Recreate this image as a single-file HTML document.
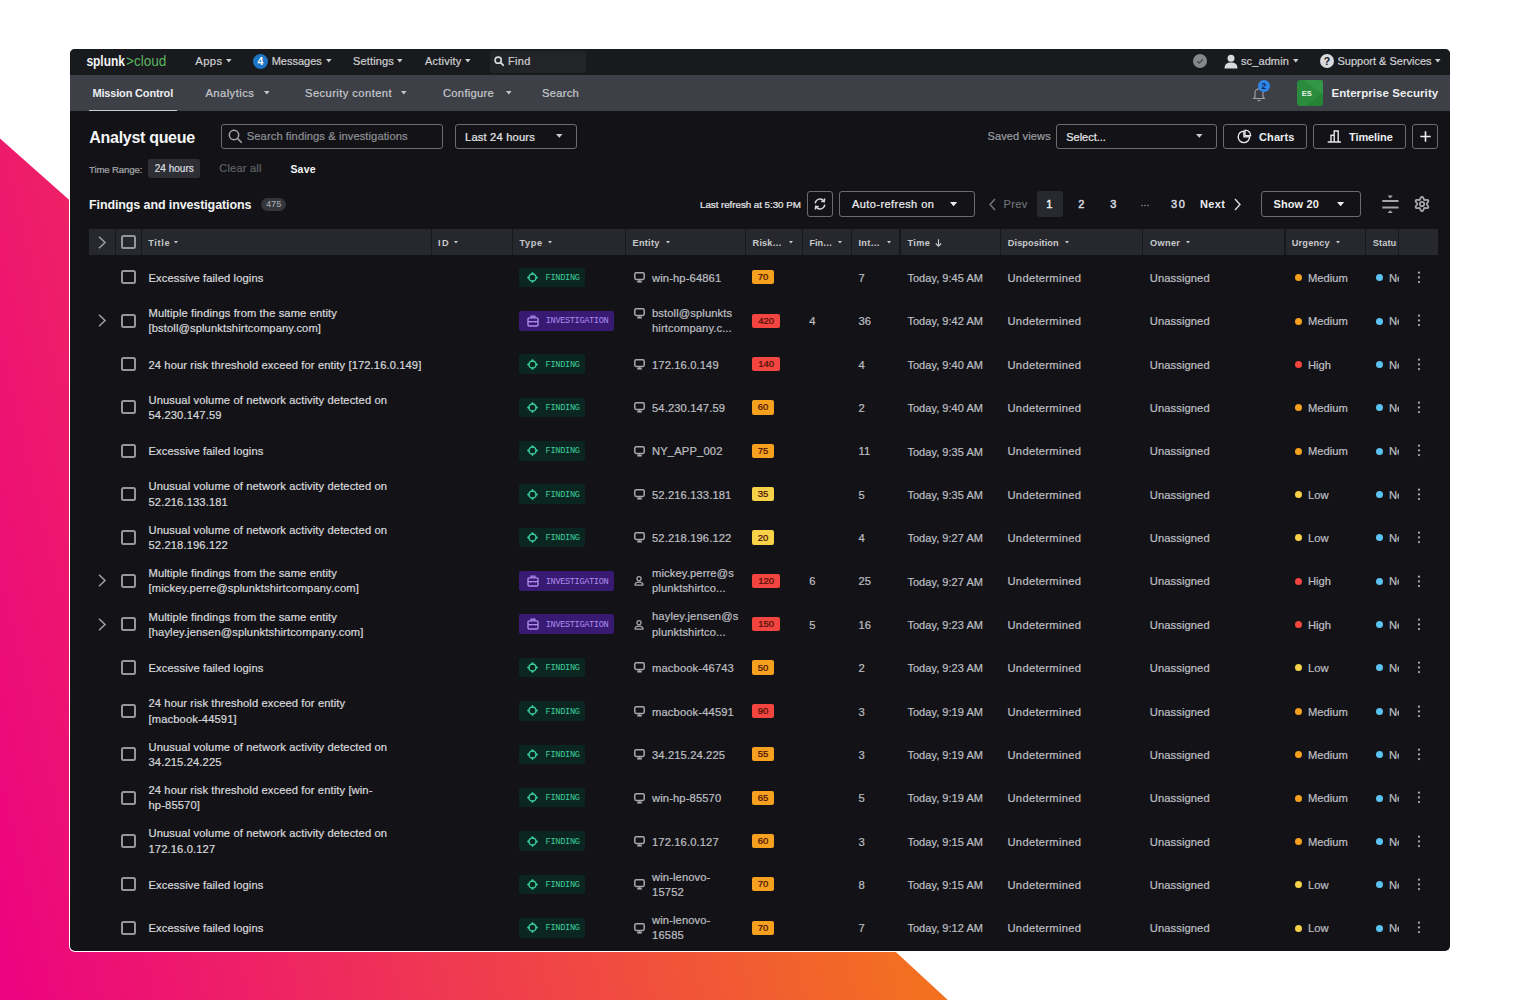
<!DOCTYPE html><html><head><meta charset="utf-8"><title>Analyst queue</title><style>
*{margin:0;padding:0;box-sizing:border-box}
html,body{width:1520px;height:1000px;overflow:hidden;background:#fff}
body{position:relative;font-family:"Liberation Sans",sans-serif}
.a{position:absolute;white-space:nowrap}
svg{position:absolute;overflow:visible}
</style></head><body>
<svg style="left:0;top:0" width="1520" height="1000" viewBox="0 0 1520 1000"><defs><linearGradient id="g" gradientUnits="userSpaceOnUse" x1="-218.2" y1="51.6" x2="652.8" y2="-154.3"><stop offset="0" stop-color="#ec0380"/><stop offset="1" stop-color="#f37020"/></linearGradient></defs><polygon fill="url(#g)" points="0,138.5 200,316 840,900 895.9,952 947.8,1000 0,1000"/></svg>
<div class="a" style="left:69.0px;top:48.0px;width:1382.0px;height:904.0px;background:#fff;border-radius:6px"></div>
<div class="a" style="left:70.0px;top:49.0px;width:1380.0px;height:902.0px;background:#131317;border-radius:5px"></div>
<div class="a" style="left:70.0px;top:49.0px;width:1380.0px;height:26.0px;background:#191a1e;border-radius:5px 5px 0 0"></div>
<div class="a" style="left:70.0px;top:75.0px;width:1380.0px;height:36.0px;background:#3d4047"></div>
<svg style="left:0;top:0" width="1520" height="1000"><text x="86.4" y="66" font-family="Liberation Sans" font-weight="bold" font-size="14.5" fill="#f4f4f5" textLength="38.6" lengthAdjust="spacingAndGlyphs">splunk</text><text x="126" y="66" font-family="Liberation Sans" font-size="14.5" fill="#5cb561" textLength="40.4" lengthAdjust="spacingAndGlyphs">&gt;cloud</text></svg>
<div class="a" style="left:195.2px;top:56.22px;font-size:11.2px;line-height:11.2px;color:#cdced1;letter-spacing:0.500px;-webkit-text-stroke:0.22px currentColor;">Apps</div>
<svg style="left:225.6px;top:58.7px" width="5.6" height="3.6" viewBox="0 0 5.6 3.6"><path d="M0 0 L5.6 0 L2.8 3.6 Z" fill="#cdced1"/></svg>
<div class="a" style="left:253.0px;top:53.5px;width:15.0px;height:15.0px;background:#1e75c4;border-radius:50%"></div>
<div class="a" style="left:257.4px;top:56.31px;font-size:10.5px;line-height:10.5px;color:#fff;font-weight:bold;">4</div>
<div class="a" style="left:271.7px;top:56.39px;font-size:11px;line-height:11px;color:#cdced1;letter-spacing:-0.005px;-webkit-text-stroke:0.22px currentColor;">Messages</div>
<svg style="left:325.9px;top:58.7px" width="5.6" height="3.6" viewBox="0 0 5.6 3.6"><path d="M0 0 L5.6 0 L2.8 3.6 Z" fill="#cdced1"/></svg>
<div class="a" style="left:353.0px;top:56.39px;font-size:11px;line-height:11px;color:#cdced1;letter-spacing:0.151px;-webkit-text-stroke:0.22px currentColor;">Settings</div>
<svg style="left:397.3px;top:58.7px" width="5.6" height="3.6" viewBox="0 0 5.6 3.6"><path d="M0 0 L5.6 0 L2.8 3.6 Z" fill="#cdced1"/></svg>
<div class="a" style="left:425.0px;top:56.39px;font-size:11px;line-height:11px;color:#cdced1;letter-spacing:0.209px;-webkit-text-stroke:0.22px currentColor;">Activity</div>
<svg style="left:464.5px;top:58.7px" width="5.6" height="3.6" viewBox="0 0 5.6 3.6"><path d="M0 0 L5.6 0 L2.8 3.6 Z" fill="#cdced1"/></svg>
<div class="a" style="left:489.5px;top:51.0px;width:96.5px;height:21.5px;background:#222428;border-radius:3px"></div>
<svg style="left:494px;top:56px" width="10" height="10" viewBox="0 0 10 10"><circle cx="4.2" cy="4.2" r="3.1" fill="none" stroke="#d9dadd" stroke-width="1.6"/><path d="M6.4 6.4 L9.2 9.2" stroke="#d9dadd" stroke-width="1.8" stroke-linecap="round"/></svg>
<div class="a" style="left:508.0px;top:56.39px;font-size:11px;line-height:11px;color:#cdced1;letter-spacing:0.301px;-webkit-text-stroke:0.22px currentColor;">Find</div>
<svg style="left:1193px;top:54px" width="14" height="14" viewBox="0 0 14 14"><circle cx="7" cy="7" r="7" fill="#85878b"/><path d="M4.2 7.2 L6.2 9.1 L9.9 5.2" stroke="#45474b" stroke-width="1.3" fill="none"/></svg>
<svg style="left:1224px;top:53.5px" width="14" height="15" viewBox="0 0 14 15"><circle cx="7" cy="4.2" r="3.5" fill="#d9dadd"/><path d="M0.5 14.5 C0.8 10 3 8.6 7 8.6 C11 8.6 13.2 10 13.5 14.5 Z" fill="#d9dadd"/></svg>
<div class="a" style="left:1241.0px;top:56.39px;font-size:11px;line-height:11px;color:#cdced1;letter-spacing:0.103px;-webkit-text-stroke:0.22px currentColor;">sc_admin</div>
<svg style="left:1292.7px;top:58.7px" width="5.6" height="3.6" viewBox="0 0 5.6 3.6"><path d="M0 0 L5.6 0 L2.8 3.6 Z" fill="#cdced1"/></svg>
<svg style="left:1320px;top:54px" width="14" height="14" viewBox="0 0 14 14"><circle cx="7" cy="7" r="7" fill="#d9dadd"/><text x="7" y="11" text-anchor="middle" font-family="Liberation Sans" font-weight="bold" font-size="10.5" fill="#17181c">?</text></svg>
<div class="a" style="left:1337.5px;top:56.39px;font-size:11px;line-height:11px;color:#cdced1;letter-spacing:-0.003px;-webkit-text-stroke:0.22px currentColor;">Support &amp; Services</div>
<svg style="left:1435.2px;top:58.7px" width="5.6" height="3.6" viewBox="0 0 5.6 3.6"><path d="M0 0 L5.6 0 L2.8 3.6 Z" fill="#cdced1"/></svg>
<div class="a" style="left:92.4px;top:87.89px;font-size:11px;line-height:11px;color:#eceef0;font-weight:bold;letter-spacing:-0.165px;">Mission Control</div>
<div class="a" style="left:89.0px;top:109.6px;width:88.0px;height:1.7px;background:#c9cbce"></div>
<div class="a" style="left:205.4px;top:87.82px;font-size:11.2px;line-height:11.2px;color:#c6c8cb;letter-spacing:0.454px;-webkit-text-stroke:0.22px currentColor;">Analytics</div>
<svg style="left:263.7px;top:91.4px" width="5.6" height="3.6" viewBox="0 0 5.6 3.6"><path d="M0 0 L5.6 0 L2.8 3.6 Z" fill="#c6c8cb"/></svg>
<div class="a" style="left:305.0px;top:87.82px;font-size:11.2px;line-height:11.2px;color:#c6c8cb;letter-spacing:0.425px;-webkit-text-stroke:0.22px currentColor;">Security content</div>
<svg style="left:400.8px;top:91.4px" width="5.6" height="3.6" viewBox="0 0 5.6 3.6"><path d="M0 0 L5.6 0 L2.8 3.6 Z" fill="#c6c8cb"/></svg>
<div class="a" style="left:443.0px;top:87.82px;font-size:11.2px;line-height:11.2px;color:#c6c8cb;letter-spacing:0.286px;-webkit-text-stroke:0.22px currentColor;">Configure</div>
<svg style="left:505.8px;top:91.4px" width="5.6" height="3.6" viewBox="0 0 5.6 3.6"><path d="M0 0 L5.6 0 L2.8 3.6 Z" fill="#c6c8cb"/></svg>
<div class="a" style="left:542.0px;top:87.82px;font-size:11.2px;line-height:11.2px;color:#c6c8cb;letter-spacing:0.271px;-webkit-text-stroke:0.22px currentColor;">Search</div>
<svg style="left:1252px;top:86px" width="14" height="16" viewBox="0 0 14 16"><path d="M3 11 L3 6.8 C3 4.3 4.8 2.8 7 2.8 C9.2 2.8 11 4.3 11 6.8 L11 11 L12.5 12.5 L1.5 12.5 Z" fill="none" stroke="#9a9da2" stroke-width="1.2" stroke-linejoin="round"/><path d="M5.5 14.5 L8.5 14.5" stroke="#9a9da2" stroke-width="1.3"/></svg>
<div class="a" style="left:1258.0px;top:80.0px;width:12.0px;height:12.0px;background:#2e86e8;border-radius:50%"></div>
<div class="a" style="left:1261.5px;top:82.10px;font-size:8.5px;line-height:8.5px;color:#0e2e5a;font-weight:bold;">2</div>
<svg style="left:1297px;top:79.6px" width="26" height="26" viewBox="0 0 26 26"><rect width="26" height="26" rx="3.5" fill="#2a8c3c"/><path d="M6 0 L26 14 L26 0 Z" fill="#3aa152" opacity="0.5"/><path d="M9 26 L26 13 L26 26 Z" fill="#1f7a32" opacity="0.5"/><text x="9.8" y="16.2" text-anchor="middle" font-family="Liberation Sans" font-weight="bold" font-size="8" fill="#e8f3e9" textLength="10" lengthAdjust="spacingAndGlyphs">ES</text></svg>
<div class="a" style="left:1331.4px;top:88.37px;font-size:11.5px;line-height:11.5px;color:#eceef0;font-weight:bold;letter-spacing:0.074px;">Enterprise Security</div>
<div class="a" style="left:89.3px;top:129.86px;font-size:16px;line-height:16px;color:#f4f5f6;font-weight:bold;letter-spacing:-0.297px;">Analyst queue</div>
<div class="a" style="left:220.6px;top:123.7px;width:222.0px;height:25.6px;border:1.2px solid #696c71;border-radius:3px"></div>
<svg style="left:228px;top:128.5px" width="15" height="15" viewBox="0 0 15 15"><circle cx="6" cy="6" r="4.7" fill="none" stroke="#a4a7ab" stroke-width="1.5"/><path d="M9.5 9.5 L13.3 13.3" stroke="#a4a7ab" stroke-width="1.6" stroke-linecap="round"/></svg>
<div class="a" style="left:246.8px;top:131.12px;font-size:11.2px;line-height:11.2px;color:#8d9095;letter-spacing:0.072px;-webkit-text-stroke:0.22px currentColor;">Search findings &amp; investigations</div>
<div class="a" style="left:455.0px;top:123.7px;width:121.6px;height:25.6px;border:1.2px solid #696c71;border-radius:3px"></div>
<div class="a" style="left:465.0px;top:131.52px;font-size:11.2px;line-height:11.2px;color:#e2e3e5;letter-spacing:0.167px;-webkit-text-stroke:0.22px currentColor;">Last 24 hours</div>
<svg style="left:556.2px;top:134.4px" width="6.6" height="3.8" viewBox="0 0 6.6 3.8"><path d="M0 0 L6.6 0 L3.3 3.8 Z" fill="#c9cbce"/></svg>
<div class="a" style="left:89.0px;top:164.57px;font-size:9.6px;line-height:9.6px;color:#a3a6aa;letter-spacing:-0.126px;-webkit-text-stroke:0.22px currentColor;">Time Range:</div>
<div class="a" style="left:147.8px;top:159.3px;width:52.2px;height:18.5px;background:#2d2f34;border-radius:2px"></div>
<div class="a" style="left:154.7px;top:164.23px;font-size:10px;line-height:10px;color:#dcdde0;letter-spacing:0.026px;-webkit-text-stroke:0.22px currentColor;">24 hours</div>
<div class="a" style="left:219.2px;top:163.19px;font-size:11px;line-height:11px;color:#5e6166;letter-spacing:0.244px;-webkit-text-stroke:0.22px currentColor;">Clear all</div>
<div class="a" style="left:290.4px;top:163.61px;font-size:10.5px;line-height:10.5px;color:#f2f3f4;font-weight:bold;letter-spacing:0.226px;">Save</div>
<div class="a" style="left:987.4px;top:131.19px;font-size:11px;line-height:11px;color:#9a9da1;letter-spacing:0.155px;-webkit-text-stroke:0.22px currentColor;">Saved views</div>
<div class="a" style="left:1056.2px;top:123.5px;width:161.0px;height:25.6px;border:1.2px solid #696c71;border-radius:3px"></div>
<div class="a" style="left:1066.3px;top:131.69px;font-size:11px;line-height:11px;color:#e6e7e9;letter-spacing:-0.030px;-webkit-text-stroke:0.22px currentColor;">Select...</div>
<svg style="left:1195.6px;top:134.4px" width="6.6" height="3.8" viewBox="0 0 6.6 3.8"><path d="M0 0 L6.6 0 L3.3 3.8 Z" fill="#c9cbce"/></svg>
<div class="a" style="left:1223.2px;top:123.5px;width:83.8px;height:25.6px;border:1.2px solid #696c71;border-radius:3px"></div>
<svg style="left:0;top:0" width="1520" height="1000"><path d="M1243.9 136.9 L1243.9 131.2 A5.7 5.7 0 1 0 1249.6 136.9 Z" fill="none" stroke="#e6e7e9" stroke-width="1.4" stroke-linejoin="round"/><path d="M1245 135.8 L1245 130.1 A5.7 5.7 0 0 1 1250.7 135.8 Z" fill="none" stroke="#e6e7e9" stroke-width="1.4" stroke-linejoin="round"/></svg>
<div class="a" style="left:1259.0px;top:131.69px;font-size:11px;line-height:11px;color:#eceef0;font-weight:bold;letter-spacing:0.112px;">Charts</div>
<div class="a" style="left:1313.2px;top:123.5px;width:92.5px;height:25.6px;border:1.2px solid #696c71;border-radius:3px"></div>
<svg style="left:0;top:0" width="1520" height="1000"><path d="M1327.7 142 L1341 142 M1331 141.8 L1331 135.2 L1334.2 135.2 L1334.2 141.8 M1334.2 135.2 L1334.2 131 L1338.2 131 L1338.2 141.8" fill="none" stroke="#e6e7e9" stroke-width="1.4"/></svg>
<div class="a" style="left:1349.0px;top:131.69px;font-size:11px;line-height:11px;color:#eceef0;font-weight:bold;letter-spacing:-0.089px;">Timeline</div>
<div class="a" style="left:1412.0px;top:123.5px;width:26.0px;height:25.6px;border:1.2px solid #696c71;border-radius:3px"></div>
<svg style="left:1419.5px;top:130.8px" width="11" height="11" viewBox="0 0 11 11"><path d="M5.5 0.3 L5.5 10.7 M0.3 5.5 L10.7 5.5" stroke="#eceef0" stroke-width="1.6"/></svg>
<div class="a" style="left:89.0px;top:198.52px;font-size:12.5px;line-height:12.5px;color:#f2f3f4;font-weight:bold;letter-spacing:-0.111px;">Findings and investigations</div>
<div class="a" style="left:261.0px;top:197.6px;width:24.5px;height:13.4px;background:#34363b;border-radius:7px"></div>
<div class="a" style="left:266.2px;top:200.32px;font-size:8.6px;line-height:8.6px;color:#9fa2a6;letter-spacing:0.331px;-webkit-text-stroke:0.22px currentColor;">475</div>
<div class="a" style="left:700.0px;top:199.70px;font-size:9.8px;line-height:9.8px;color:#e4e5e7;letter-spacing:-0.047px;-webkit-text-stroke:0.22px currentColor;">Last refresh at 5:30 PM</div>
<div class="a" style="left:807.0px;top:191.0px;width:25.5px;height:25.5px;border:1.2px solid #696c71;border-radius:3px"></div>
<svg style="left:813px;top:197px" width="14" height="14" viewBox="0 0 14 14"><path d="M2.2 6.3 A4.9 4.9 0 0 1 11 4" fill="none" stroke="#d7d8db" stroke-width="1.4"/><path d="M11.8 7.7 A4.9 4.9 0 0 1 3 10" fill="none" stroke="#d7d8db" stroke-width="1.4"/><path d="M11.7 1.5 L11.3 4.6 L8.2 4.2" fill="none" stroke="#d7d8db" stroke-width="1.4"/><path d="M2.3 12.5 L2.7 9.4 L5.8 9.8" fill="none" stroke="#d7d8db" stroke-width="1.4"/></svg>
<div class="a" style="left:839.0px;top:191.0px;width:135.5px;height:25.5px;border:1.2px solid #696c71;border-radius:3px"></div>
<div class="a" style="left:852.0px;top:199.09px;font-size:11px;line-height:11px;color:#eceef0;-webkit-text-stroke:0.4px #eceef0;letter-spacing:0.427px;-webkit-text-stroke:0.22px currentColor;">Auto-refresh on</div>
<svg style="left:950.0px;top:201.7px" width="7.2" height="4.2" viewBox="0 0 7.2 4.2"><path d="M0 0 L7.2 0 L3.6 4.2 Z" fill="#eceef0"/></svg>
<svg style="left:987.5px;top:197.5px" width="9" height="13" viewBox="0 0 9 13"><path d="M7 1 L2 6.5 L7 12" fill="none" stroke="#76797e" stroke-width="1.4"/></svg>
<div class="a" style="left:1003.5px;top:199.09px;font-size:11px;line-height:11px;color:#6c6f74;letter-spacing:0.394px;-webkit-text-stroke:0.22px currentColor;">Prev</div>
<div class="a" style="left:1036.5px;top:191.0px;width:26.0px;height:25.5px;background:#28292e;border-radius:3px"></div>
<div class="a" style="left:1046.3px;top:199.09px;font-size:11px;line-height:11px;color:#eceef0;-webkit-text-stroke:0.45px #eceef0;">1</div>
<div class="a" style="left:1078.2px;top:199.09px;font-size:11px;line-height:11px;color:#dcdde0;-webkit-text-stroke:0.45px #dcdde0;">2</div>
<div class="a" style="left:1110.2px;top:199.09px;font-size:11px;line-height:11px;color:#dcdde0;-webkit-text-stroke:0.45px #dcdde0;">3</div>
<svg style="left:1141px;top:203.5px" width="8" height="3" viewBox="0 0 8 3"><circle cx="1" cy="1.5" r="0.75" fill="#9a9da1"/><circle cx="4" cy="1.5" r="0.75" fill="#9a9da1"/><circle cx="7" cy="1.5" r="0.75" fill="#9a9da1"/></svg>
<div class="a" style="left:1171.0px;top:199.09px;font-size:11px;line-height:11px;color:#dcdde0;-webkit-text-stroke:0.45px #dcdde0;letter-spacing:1.565px;">30</div>
<div class="a" style="left:1200.0px;top:199.09px;font-size:11px;line-height:11px;color:#eceef0;font-weight:bold;letter-spacing:0.319px;">Next</div>
<svg style="left:1232.5px;top:197.5px" width="9" height="13" viewBox="0 0 9 13"><path d="M2 1 L7 6.5 L2 12" fill="none" stroke="#dcdde0" stroke-width="1.4"/></svg>
<div class="a" style="left:1260.5px;top:191.0px;width:100.0px;height:25.5px;border:1.2px solid #696c71;border-radius:3px"></div>
<div class="a" style="left:1273.5px;top:199.09px;font-size:11px;line-height:11px;color:#eceef0;font-weight:bold;letter-spacing:0.113px;">Show 20</div>
<svg style="left:1336.8px;top:201.7px" width="7.2" height="4.2" viewBox="0 0 7.2 4.2"><path d="M0 0 L7.2 0 L3.6 4.2 Z" fill="#eceef0"/></svg>
<svg style="left:1381.5px;top:194.5px" width="17" height="19" viewBox="0 0 17 19"><path d="M0.3 6.1 L16.5 6.1 M0.3 12.5 L16.5 12.5" stroke="#a3a5a9" stroke-width="2"/><path d="M5.6 0.6 L10.8 0.6 L8.2 3.4 Z M5.6 18.1 L10.8 18.1 L8.2 15.3 Z" fill="#a3a5a9"/></svg>
<svg style="left:1411.6px;top:193.6px" width="20" height="20" viewBox="0 0 20 20"><polygon points="14.65,10.00 14.70,10.25 14.86,10.51 15.10,10.81 15.39,11.15 15.70,11.53 15.98,11.94 16.19,12.38 16.31,12.81 16.32,13.22 16.19,13.57 15.95,13.86 15.59,14.06 15.16,14.18 14.67,14.21 14.17,14.17 13.69,14.10 13.25,14.01 12.87,13.96 12.57,13.95 12.33,14.03 12.14,14.20 11.99,14.47 11.85,14.82 11.70,15.24 11.53,15.70 11.31,16.15 11.04,16.55 10.72,16.87 10.37,17.08 10.00,17.15 9.63,17.08 9.28,16.87 8.96,16.55 8.69,16.15 8.47,15.70 8.30,15.24 8.15,14.82 8.01,14.47 7.86,14.20 7.68,14.03 7.43,13.95 7.13,13.96 6.75,14.01 6.31,14.10 5.83,14.17 5.33,14.21 4.84,14.18 4.41,14.06 4.05,13.86 3.81,13.57 3.68,13.22 3.69,12.81 3.81,12.38 4.02,11.94 4.30,11.53 4.61,11.15 4.90,10.81 5.14,10.51 5.30,10.25 5.35,10.00 5.30,9.75 5.14,9.49 4.90,9.19 4.61,8.85 4.30,8.47 4.02,8.06 3.81,7.62 3.69,7.19 3.68,6.78 3.81,6.43 4.05,6.14 4.41,5.94 4.84,5.82 5.33,5.79 5.83,5.83 6.31,5.90 6.75,5.99 7.13,6.04 7.43,6.05 7.67,5.97 7.86,5.80 8.01,5.53 8.15,5.18 8.30,4.76 8.47,4.30 8.69,3.85 8.96,3.45 9.28,3.13 9.63,2.92 10.00,2.85 10.37,2.92 10.72,3.13 11.04,3.45 11.31,3.85 11.53,4.30 11.70,4.76 11.85,5.18 11.99,5.53 12.14,5.80 12.33,5.97 12.57,6.05 12.87,6.04 13.25,5.99 13.69,5.90 14.17,5.83 14.67,5.79 15.16,5.82 15.59,5.94 15.95,6.14 16.19,6.43 16.32,6.78 16.31,7.19 16.19,7.62 15.98,8.06 15.70,8.47 15.39,8.85 15.10,9.19 14.86,9.49 14.70,9.75" fill="none" stroke="#a3a5a9" stroke-width="1.8" stroke-linejoin="round"/><circle cx="10" cy="10" r="2.2" fill="none" stroke="#a3a5a9" stroke-width="1.8"/></svg>
<div class="a" style="left:89.1px;top:229.3px;width:1348.9px;height:25.7px;background:#26282d"></div>
<div class="a" style="left:114.6px;top:229.3px;width:1.2px;height:25.7px;background:#18191d"></div>
<div class="a" style="left:140.8px;top:229.3px;width:1.2px;height:25.7px;background:#18191d"></div>
<div class="a" style="left:430.6px;top:229.3px;width:1.2px;height:25.7px;background:#18191d"></div>
<div class="a" style="left:511.8px;top:229.3px;width:1.2px;height:25.7px;background:#18191d"></div>
<div class="a" style="left:625.1px;top:229.3px;width:1.2px;height:25.7px;background:#18191d"></div>
<div class="a" style="left:745.3px;top:229.3px;width:1.2px;height:25.7px;background:#18191d"></div>
<div class="a" style="left:801.9px;top:229.3px;width:1.2px;height:25.7px;background:#18191d"></div>
<div class="a" style="left:851.0px;top:229.3px;width:1.2px;height:25.7px;background:#18191d"></div>
<div class="a" style="left:899.4px;top:229.3px;width:1.2px;height:25.7px;background:#18191d"></div>
<div class="a" style="left:999.8px;top:229.3px;width:1.2px;height:25.7px;background:#18191d"></div>
<div class="a" style="left:1141.5px;top:229.3px;width:1.2px;height:25.7px;background:#18191d"></div>
<div class="a" style="left:1284.4px;top:229.3px;width:1.2px;height:25.7px;background:#18191d"></div>
<div class="a" style="left:1365.2px;top:229.3px;width:1.2px;height:25.7px;background:#18191d"></div>
<div class="a" style="left:1397.7px;top:229.3px;width:1.2px;height:25.7px;background:#18191d"></div>
<svg style="left:97.8px;top:236.2px" width="9" height="13" viewBox="0 0 9 13"><path d="M1 0.8 L7 6.5 L1 12.2" fill="none" stroke="#9d9fa3" stroke-width="1.5"/></svg>
<div class="a" style="left:121.0px;top:235.3px;width:14.8px;height:14.2px;border:2px solid #96979a;border-radius:2.5px"></div>
<div class="a" style="left:148.3px;top:238.51px;font-size:9.2px;line-height:9.2px;color:#c6c8cb;font-weight:bold;letter-spacing:0.620px;">Title</div>
<svg style="left:174.2px;top:241.0px" width="4" height="2.6" viewBox="0 0 4 2.6"><path d="M0 0 L4 0 L2.0 2.6 Z" fill="#c6c8cb"/></svg>
<div class="a" style="left:438.1px;top:238.51px;font-size:9.2px;line-height:9.2px;color:#c6c8cb;font-weight:bold;letter-spacing:1.413px;">ID</div>
<svg style="left:454.0px;top:241.0px" width="4" height="2.6" viewBox="0 0 4 2.6"><path d="M0 0 L4 0 L2.0 2.6 Z" fill="#c6c8cb"/></svg>
<div class="a" style="left:519.6px;top:238.51px;font-size:9.2px;line-height:9.2px;color:#c6c8cb;font-weight:bold;letter-spacing:0.580px;">Type</div>
<svg style="left:548.0px;top:241.0px" width="4" height="2.6" viewBox="0 0 4 2.6"><path d="M0 0 L4 0 L2.0 2.6 Z" fill="#c6c8cb"/></svg>
<div class="a" style="left:632.6px;top:238.51px;font-size:9.2px;line-height:9.2px;color:#c6c8cb;font-weight:bold;letter-spacing:0.236px;">Entity</div>
<svg style="left:666.3px;top:241.0px" width="4" height="2.6" viewBox="0 0 4 2.6"><path d="M0 0 L4 0 L2.0 2.6 Z" fill="#c6c8cb"/></svg>
<div class="a" style="left:752.6px;top:238.51px;font-size:9.2px;line-height:9.2px;color:#c6c8cb;font-weight:bold;letter-spacing:0.151px;">Risk&#8230;</div>
<svg style="left:788.8px;top:241.0px" width="4" height="2.6" viewBox="0 0 4 2.6"><path d="M0 0 L4 0 L2.0 2.6 Z" fill="#c6c8cb"/></svg>
<div class="a" style="left:809.5px;top:238.51px;font-size:9.2px;line-height:9.2px;color:#c6c8cb;font-weight:bold;letter-spacing:-0.055px;">Fin&#8230;</div>
<svg style="left:837.9px;top:241.0px" width="4" height="2.6" viewBox="0 0 4 2.6"><path d="M0 0 L4 0 L2.0 2.6 Z" fill="#c6c8cb"/></svg>
<div class="a" style="left:858.5px;top:238.51px;font-size:9.2px;line-height:9.2px;color:#c6c8cb;font-weight:bold;letter-spacing:0.296px;">Int&#8230;</div>
<svg style="left:886.7px;top:241.0px" width="4" height="2.6" viewBox="0 0 4 2.6"><path d="M0 0 L4 0 L2.0 2.6 Z" fill="#c6c8cb"/></svg>
<div class="a" style="left:907.4px;top:238.51px;font-size:9.2px;line-height:9.2px;color:#c6c8cb;font-weight:bold;letter-spacing:0.374px;">Time</div>
<div class="a" style="left:1007.8px;top:238.51px;font-size:9.2px;line-height:9.2px;color:#c6c8cb;font-weight:bold;letter-spacing:0.078px;">Disposition</div>
<svg style="left:1065.3px;top:241.0px" width="4" height="2.6" viewBox="0 0 4 2.6"><path d="M0 0 L4 0 L2.0 2.6 Z" fill="#c6c8cb"/></svg>
<div class="a" style="left:1150.1px;top:238.51px;font-size:9.2px;line-height:9.2px;color:#c6c8cb;font-weight:bold;letter-spacing:0.303px;">Owner</div>
<svg style="left:1186.3px;top:241.0px" width="4" height="2.6" viewBox="0 0 4 2.6"><path d="M0 0 L4 0 L2.0 2.6 Z" fill="#c6c8cb"/></svg>
<div class="a" style="left:1291.7px;top:238.51px;font-size:9.2px;line-height:9.2px;color:#c6c8cb;font-weight:bold;letter-spacing:0.206px;">Urgency</div>
<svg style="left:1335.9px;top:241.0px" width="4" height="2.6" viewBox="0 0 4 2.6"><path d="M0 0 L4 0 L2.0 2.6 Z" fill="#c6c8cb"/></svg>
<div class="a" style="left:1372.8px;top:238.51px;width:24.5px;overflow:hidden;font-size:9.2px;line-height:9.2px;color:#c6c8cb;font-weight:bold;letter-spacing:0.1px">Status</div>
<svg style="left:934.6px;top:238.8px" width="7" height="8" viewBox="0 0 7 8"><path d="M3.5 0.3 L3.5 7.2 M0.8 4.5 L3.5 7.2 L6.2 4.5" fill="none" stroke="#c6c8cb" stroke-width="1.2"/></svg>
<div class="a" style="left:121.0px;top:270.2px;width:14.8px;height:14.2px;border:2px solid #96979a;border-radius:2.5px"></div>
<div class="a" style="left:148.5px;top:272.92px;font-size:11.2px;line-height:11.2px;color:#d6d7da;letter-spacing:0.102px;-webkit-text-stroke:0.22px currentColor;">Excessive failed logins</div>
<div class="a" style="left:519.4px;top:267.5px;width:65.6px;height:19.7px;background:#0b2620;border-radius:2px"></div>
<svg style="left:526.7px;top:271.8px" width="11" height="11" viewBox="0 0 11 11"><circle cx="5.5" cy="5.5" r="3.6" fill="none" stroke="#3ccf9c" stroke-width="1.5"/><path d="M5.5 0.2 L5.5 2.4 M5.5 8.6 L5.5 10.8 M0.2 5.5 L2.4 5.5 M8.6 5.5 L10.8 5.5" stroke="#3ccf9c" stroke-width="1.5"/></svg>
<div class="a" style="left:545.6px;top:274.02px;font-size:8.6px;line-height:8.6px;color:#3ccf9c;font-family:'Liberation Mono',monospace;letter-spacing:-0.283px;">FINDING</div>
<svg style="left:633.5px;top:272.2px" width="11" height="11" viewBox="0 0 11 11"><rect x="0.8" y="0.8" width="9.4" height="6.6" rx="1.4" fill="none" stroke="#a7a9ad" stroke-width="1.5"/><path d="M3.2 9.6 L7.8 9.6" stroke="#a7a9ad" stroke-width="1.9"/><path d="M5.5 7.4 L5.5 8.8" stroke="#a7a9ad" stroke-width="1.4"/></svg>
<div class="a" style="left:652.0px;top:272.92px;font-size:11.2px;line-height:11.2px;color:#bdbec1;letter-spacing:0.123px;-webkit-text-stroke:0.22px currentColor;">win-hp-64861</div>
<div class="a" style="left:752.1px;top:270.2px;width:22.0px;height:14.3px;background:#f5a01e;border-radius:2px"></div>
<div class="a" style="left:752.1px;top:272.36px;width:22px;text-align:center;font-size:9.5px;line-height:9.5px;color:#4a1006;-webkit-text-stroke:0.22px currentColor;">70</div>
<div class="a" style="left:858.5px;top:272.92px;font-size:11.2px;line-height:11.2px;color:#bdbec1;-webkit-text-stroke:0.22px currentColor;">7</div>
<div class="a" style="left:907.4px;top:273.09px;font-size:11px;line-height:11px;color:#bdbec1;letter-spacing:0.045px;-webkit-text-stroke:0.22px currentColor;">Today, 9:45 AM</div>
<div class="a" style="left:1007.5px;top:272.92px;font-size:11.2px;line-height:11.2px;color:#bdbec1;letter-spacing:0.294px;-webkit-text-stroke:0.22px currentColor;">Undetermined</div>
<div class="a" style="left:1149.8px;top:272.92px;font-size:11.2px;line-height:11.2px;color:#bdbec1;letter-spacing:0.080px;-webkit-text-stroke:0.22px currentColor;">Unassigned</div>
<svg style="left:1294.9px;top:274.2px" width="7" height="7" viewBox="0 0 7 7"><circle cx="3.5" cy="3.5" r="3.5" fill="#f5a01e"/></svg>
<div class="a" style="left:1308.0px;top:272.92px;font-size:11.2px;line-height:11.2px;color:#bdbec1;-webkit-text-stroke:0.22px currentColor;">Medium</div>
<svg style="left:1375.8px;top:274.2px" width="7" height="7" viewBox="0 0 7 7"><circle cx="3.5" cy="3.5" r="3.5" fill="#5ac3f2"/></svg>
<div class="a" style="left:1389px;top:272.92px;width:9.5px;overflow:hidden;font-size:11.2px;line-height:11.2px;color:#bdbec1;-webkit-text-stroke:0.22px currentColor;">New</div>
<svg style="left:1416.5px;top:271.0px" width="4" height="13" viewBox="0 0 4 13"><circle cx="2" cy="1.7" r="1.1" fill="#aeafb2"/><circle cx="2" cy="6.4" r="1.1" fill="#aeafb2"/><circle cx="2" cy="11.1" r="1.1" fill="#aeafb2"/></svg>
<svg style="left:97.8px;top:314.3px" width="9" height="13" viewBox="0 0 9 13"><path d="M1 0.8 L7 6.5 L1 12.2" fill="none" stroke="#a0a2a6" stroke-width="1.5"/></svg>
<div class="a" style="left:121.0px;top:313.6px;width:14.8px;height:14.2px;border:2px solid #96979a;border-radius:2.5px"></div>
<div class="a" style="left:148.5px;top:307.98px;font-size:11.2px;line-height:11.2px;color:#d6d7da;letter-spacing:0.100px;-webkit-text-stroke:0.22px currentColor;">Multiple findings from the same entity</div>
<div class="a" style="left:148.5px;top:323.28px;font-size:11.2px;line-height:11.2px;color:#d6d7da;letter-spacing:0.109px;-webkit-text-stroke:0.22px currentColor;">[bstoll@splunktshirtcompany.com]</div>
<div class="a" style="left:519.4px;top:310.9px;width:94.8px;height:19.7px;background:#391a72;border-radius:2px"></div>
<svg style="left:526.7px;top:314.5px" width="12" height="12" viewBox="0 0 12 12"><path d="M4.2 2.8 L4.2 1.2 L7.8 1.2 L7.8 2.8" fill="none" stroke="#b08cee" stroke-width="1.3"/><rect x="1" y="2.9" width="10" height="8.1" rx="1.2" fill="none" stroke="#b08cee" stroke-width="1.4"/><path d="M1 6.6 L11 6.6" stroke="#b08cee" stroke-width="1.2"/><path d="M3.6 5.9 L3.6 7.6 M8.4 5.9 L8.4 7.6" stroke="#b08cee" stroke-width="1.4"/></svg>
<div class="a" style="left:545.8px;top:317.38px;font-size:8.6px;line-height:8.6px;color:#b08cee;font-family:'Liberation Mono',monospace;letter-spacing:-0.354px;">INVESTIGATION</div>
<svg style="left:633.5px;top:307.5px" width="11" height="11" viewBox="0 0 11 11"><rect x="0.8" y="0.8" width="9.4" height="6.6" rx="1.4" fill="none" stroke="#a7a9ad" stroke-width="1.5"/><path d="M3.2 9.6 L7.8 9.6" stroke="#a7a9ad" stroke-width="1.9"/><path d="M5.5 7.4 L5.5 8.8" stroke="#a7a9ad" stroke-width="1.4"/></svg>
<div class="a" style="left:652.0px;top:307.88px;font-size:11.2px;line-height:11.2px;color:#bdbec1;letter-spacing:0.112px;-webkit-text-stroke:0.22px currentColor;">bstoll@splunkts</div>
<div class="a" style="left:652.0px;top:323.28px;font-size:11.2px;line-height:11.2px;color:#bdbec1;letter-spacing:0.104px;-webkit-text-stroke:0.22px currentColor;">hirtcompany.c...</div>
<div class="a" style="left:752.1px;top:313.6px;width:28.0px;height:14.3px;background:#f2453f;border-radius:2px"></div>
<div class="a" style="left:752.1px;top:315.72px;width:28px;text-align:center;font-size:9.5px;line-height:9.5px;color:#4a1006;-webkit-text-stroke:0.22px currentColor;">420</div>
<div class="a" style="left:809.3px;top:316.28px;font-size:11.2px;line-height:11.2px;color:#bdbec1;-webkit-text-stroke:0.22px currentColor;">4</div>
<div class="a" style="left:858.5px;top:316.28px;font-size:11.2px;line-height:11.2px;color:#bdbec1;-webkit-text-stroke:0.22px currentColor;">36</div>
<div class="a" style="left:907.4px;top:316.45px;font-size:11px;line-height:11px;color:#bdbec1;letter-spacing:0.045px;-webkit-text-stroke:0.22px currentColor;">Today, 9:42 AM</div>
<div class="a" style="left:1007.5px;top:316.28px;font-size:11.2px;line-height:11.2px;color:#bdbec1;letter-spacing:0.294px;-webkit-text-stroke:0.22px currentColor;">Undetermined</div>
<div class="a" style="left:1149.8px;top:316.28px;font-size:11.2px;line-height:11.2px;color:#bdbec1;letter-spacing:0.080px;-webkit-text-stroke:0.22px currentColor;">Unassigned</div>
<svg style="left:1294.9px;top:317.6px" width="7" height="7" viewBox="0 0 7 7"><circle cx="3.5" cy="3.5" r="3.5" fill="#f5a01e"/></svg>
<div class="a" style="left:1308.0px;top:316.28px;font-size:11.2px;line-height:11.2px;color:#bdbec1;-webkit-text-stroke:0.22px currentColor;">Medium</div>
<svg style="left:1375.8px;top:317.6px" width="7" height="7" viewBox="0 0 7 7"><circle cx="3.5" cy="3.5" r="3.5" fill="#5ac3f2"/></svg>
<div class="a" style="left:1389px;top:316.28px;width:9.5px;overflow:hidden;font-size:11.2px;line-height:11.2px;color:#bdbec1;-webkit-text-stroke:0.22px currentColor;">New</div>
<svg style="left:1416.5px;top:314.4px" width="4" height="13" viewBox="0 0 4 13"><circle cx="2" cy="1.7" r="1.1" fill="#aeafb2"/><circle cx="2" cy="6.4" r="1.1" fill="#aeafb2"/><circle cx="2" cy="11.1" r="1.1" fill="#aeafb2"/></svg>
<div class="a" style="left:121.0px;top:356.9px;width:14.8px;height:14.2px;border:2px solid #96979a;border-radius:2.5px"></div>
<div class="a" style="left:148.5px;top:359.64px;font-size:11.2px;line-height:11.2px;color:#d6d7da;letter-spacing:0.099px;-webkit-text-stroke:0.22px currentColor;">24 hour risk threshold exceed for entity [172.16.0.149]</div>
<div class="a" style="left:519.4px;top:354.2px;width:65.6px;height:19.7px;background:#0b2620;border-radius:2px"></div>
<svg style="left:526.7px;top:358.5px" width="11" height="11" viewBox="0 0 11 11"><circle cx="5.5" cy="5.5" r="3.6" fill="none" stroke="#3ccf9c" stroke-width="1.5"/><path d="M5.5 0.2 L5.5 2.4 M5.5 8.6 L5.5 10.8 M0.2 5.5 L2.4 5.5 M8.6 5.5 L10.8 5.5" stroke="#3ccf9c" stroke-width="1.5"/></svg>
<div class="a" style="left:545.6px;top:360.74px;font-size:8.6px;line-height:8.6px;color:#3ccf9c;font-family:'Liberation Mono',monospace;letter-spacing:-0.283px;">FINDING</div>
<svg style="left:633.5px;top:358.9px" width="11" height="11" viewBox="0 0 11 11"><rect x="0.8" y="0.8" width="9.4" height="6.6" rx="1.4" fill="none" stroke="#a7a9ad" stroke-width="1.5"/><path d="M3.2 9.6 L7.8 9.6" stroke="#a7a9ad" stroke-width="1.9"/><path d="M5.5 7.4 L5.5 8.8" stroke="#a7a9ad" stroke-width="1.4"/></svg>
<div class="a" style="left:652.0px;top:359.64px;font-size:11.2px;line-height:11.2px;color:#bdbec1;letter-spacing:0.119px;-webkit-text-stroke:0.22px currentColor;">172.16.0.149</div>
<div class="a" style="left:752.1px;top:356.9px;width:28.0px;height:14.3px;background:#f2453f;border-radius:2px"></div>
<div class="a" style="left:752.1px;top:359.08px;width:28px;text-align:center;font-size:9.5px;line-height:9.5px;color:#4a1006;-webkit-text-stroke:0.22px currentColor;">140</div>
<div class="a" style="left:858.5px;top:359.64px;font-size:11.2px;line-height:11.2px;color:#bdbec1;-webkit-text-stroke:0.22px currentColor;">4</div>
<div class="a" style="left:907.4px;top:359.81px;font-size:11px;line-height:11px;color:#bdbec1;letter-spacing:0.045px;-webkit-text-stroke:0.22px currentColor;">Today, 9:40 AM</div>
<div class="a" style="left:1007.5px;top:359.64px;font-size:11.2px;line-height:11.2px;color:#bdbec1;letter-spacing:0.294px;-webkit-text-stroke:0.22px currentColor;">Undetermined</div>
<div class="a" style="left:1149.8px;top:359.64px;font-size:11.2px;line-height:11.2px;color:#bdbec1;letter-spacing:0.080px;-webkit-text-stroke:0.22px currentColor;">Unassigned</div>
<svg style="left:1294.9px;top:360.9px" width="7" height="7" viewBox="0 0 7 7"><circle cx="3.5" cy="3.5" r="3.5" fill="#f2453f"/></svg>
<div class="a" style="left:1308.0px;top:359.64px;font-size:11.2px;line-height:11.2px;color:#bdbec1;-webkit-text-stroke:0.22px currentColor;">High</div>
<svg style="left:1375.8px;top:360.9px" width="7" height="7" viewBox="0 0 7 7"><circle cx="3.5" cy="3.5" r="3.5" fill="#5ac3f2"/></svg>
<div class="a" style="left:1389px;top:359.64px;width:9.5px;overflow:hidden;font-size:11.2px;line-height:11.2px;color:#bdbec1;-webkit-text-stroke:0.22px currentColor;">New</div>
<svg style="left:1416.5px;top:357.7px" width="4" height="13" viewBox="0 0 4 13"><circle cx="2" cy="1.7" r="1.1" fill="#aeafb2"/><circle cx="2" cy="6.4" r="1.1" fill="#aeafb2"/><circle cx="2" cy="11.1" r="1.1" fill="#aeafb2"/></svg>
<div class="a" style="left:121.0px;top:400.3px;width:14.8px;height:14.2px;border:2px solid #96979a;border-radius:2.5px"></div>
<div class="a" style="left:148.5px;top:394.70px;font-size:11.2px;line-height:11.2px;color:#d6d7da;letter-spacing:0.104px;-webkit-text-stroke:0.22px currentColor;">Unusual volume of network activity detected on</div>
<div class="a" style="left:148.5px;top:410.00px;font-size:11.2px;line-height:11.2px;color:#d6d7da;letter-spacing:0.119px;-webkit-text-stroke:0.22px currentColor;">54.230.147.59</div>
<div class="a" style="left:519.4px;top:397.6px;width:65.6px;height:19.7px;background:#0b2620;border-radius:2px"></div>
<svg style="left:526.7px;top:401.9px" width="11" height="11" viewBox="0 0 11 11"><circle cx="5.5" cy="5.5" r="3.6" fill="none" stroke="#3ccf9c" stroke-width="1.5"/><path d="M5.5 0.2 L5.5 2.4 M5.5 8.6 L5.5 10.8 M0.2 5.5 L2.4 5.5 M8.6 5.5 L10.8 5.5" stroke="#3ccf9c" stroke-width="1.5"/></svg>
<div class="a" style="left:545.6px;top:404.10px;font-size:8.6px;line-height:8.6px;color:#3ccf9c;font-family:'Liberation Mono',monospace;letter-spacing:-0.283px;">FINDING</div>
<svg style="left:633.5px;top:402.3px" width="11" height="11" viewBox="0 0 11 11"><rect x="0.8" y="0.8" width="9.4" height="6.6" rx="1.4" fill="none" stroke="#a7a9ad" stroke-width="1.5"/><path d="M3.2 9.6 L7.8 9.6" stroke="#a7a9ad" stroke-width="1.9"/><path d="M5.5 7.4 L5.5 8.8" stroke="#a7a9ad" stroke-width="1.4"/></svg>
<div class="a" style="left:652.0px;top:403.00px;font-size:11.2px;line-height:11.2px;color:#bdbec1;letter-spacing:0.119px;-webkit-text-stroke:0.22px currentColor;">54.230.147.59</div>
<div class="a" style="left:752.1px;top:400.3px;width:22.0px;height:14.3px;background:#f5a01e;border-radius:2px"></div>
<div class="a" style="left:752.1px;top:402.44px;width:22px;text-align:center;font-size:9.5px;line-height:9.5px;color:#4a1006;-webkit-text-stroke:0.22px currentColor;">60</div>
<div class="a" style="left:858.5px;top:403.00px;font-size:11.2px;line-height:11.2px;color:#bdbec1;-webkit-text-stroke:0.22px currentColor;">2</div>
<div class="a" style="left:907.4px;top:403.17px;font-size:11px;line-height:11px;color:#bdbec1;letter-spacing:0.045px;-webkit-text-stroke:0.22px currentColor;">Today, 9:40 AM</div>
<div class="a" style="left:1007.5px;top:403.00px;font-size:11.2px;line-height:11.2px;color:#bdbec1;letter-spacing:0.294px;-webkit-text-stroke:0.22px currentColor;">Undetermined</div>
<div class="a" style="left:1149.8px;top:403.00px;font-size:11.2px;line-height:11.2px;color:#bdbec1;letter-spacing:0.080px;-webkit-text-stroke:0.22px currentColor;">Unassigned</div>
<svg style="left:1294.9px;top:404.3px" width="7" height="7" viewBox="0 0 7 7"><circle cx="3.5" cy="3.5" r="3.5" fill="#f5a01e"/></svg>
<div class="a" style="left:1308.0px;top:403.00px;font-size:11.2px;line-height:11.2px;color:#bdbec1;-webkit-text-stroke:0.22px currentColor;">Medium</div>
<svg style="left:1375.8px;top:404.3px" width="7" height="7" viewBox="0 0 7 7"><circle cx="3.5" cy="3.5" r="3.5" fill="#5ac3f2"/></svg>
<div class="a" style="left:1389px;top:403.00px;width:9.5px;overflow:hidden;font-size:11.2px;line-height:11.2px;color:#bdbec1;-webkit-text-stroke:0.22px currentColor;">New</div>
<svg style="left:1416.5px;top:401.1px" width="4" height="13" viewBox="0 0 4 13"><circle cx="2" cy="1.7" r="1.1" fill="#aeafb2"/><circle cx="2" cy="6.4" r="1.1" fill="#aeafb2"/><circle cx="2" cy="11.1" r="1.1" fill="#aeafb2"/></svg>
<div class="a" style="left:121.0px;top:443.6px;width:14.8px;height:14.2px;border:2px solid #96979a;border-radius:2.5px"></div>
<div class="a" style="left:148.5px;top:446.36px;font-size:11.2px;line-height:11.2px;color:#d6d7da;letter-spacing:0.102px;-webkit-text-stroke:0.22px currentColor;">Excessive failed logins</div>
<div class="a" style="left:519.4px;top:440.9px;width:65.6px;height:19.7px;background:#0b2620;border-radius:2px"></div>
<svg style="left:526.7px;top:445.2px" width="11" height="11" viewBox="0 0 11 11"><circle cx="5.5" cy="5.5" r="3.6" fill="none" stroke="#3ccf9c" stroke-width="1.5"/><path d="M5.5 0.2 L5.5 2.4 M5.5 8.6 L5.5 10.8 M0.2 5.5 L2.4 5.5 M8.6 5.5 L10.8 5.5" stroke="#3ccf9c" stroke-width="1.5"/></svg>
<div class="a" style="left:545.6px;top:447.46px;font-size:8.6px;line-height:8.6px;color:#3ccf9c;font-family:'Liberation Mono',monospace;letter-spacing:-0.283px;">FINDING</div>
<svg style="left:633.5px;top:445.6px" width="11" height="11" viewBox="0 0 11 11"><rect x="0.8" y="0.8" width="9.4" height="6.6" rx="1.4" fill="none" stroke="#a7a9ad" stroke-width="1.5"/><path d="M3.2 9.6 L7.8 9.6" stroke="#a7a9ad" stroke-width="1.9"/><path d="M5.5 7.4 L5.5 8.8" stroke="#a7a9ad" stroke-width="1.4"/></svg>
<div class="a" style="left:652.0px;top:446.36px;font-size:11.2px;line-height:11.2px;color:#bdbec1;letter-spacing:0.153px;-webkit-text-stroke:0.22px currentColor;">NY_APP_002</div>
<div class="a" style="left:752.1px;top:443.6px;width:22.0px;height:14.3px;background:#f5a01e;border-radius:2px"></div>
<div class="a" style="left:752.1px;top:445.80px;width:22px;text-align:center;font-size:9.5px;line-height:9.5px;color:#4a1006;-webkit-text-stroke:0.22px currentColor;">75</div>
<div class="a" style="left:858.5px;top:446.36px;font-size:11.2px;line-height:11.2px;color:#bdbec1;-webkit-text-stroke:0.22px currentColor;">11</div>
<div class="a" style="left:907.4px;top:446.53px;font-size:11px;line-height:11px;color:#bdbec1;letter-spacing:0.045px;-webkit-text-stroke:0.22px currentColor;">Today, 9:35 AM</div>
<div class="a" style="left:1007.5px;top:446.36px;font-size:11.2px;line-height:11.2px;color:#bdbec1;letter-spacing:0.294px;-webkit-text-stroke:0.22px currentColor;">Undetermined</div>
<div class="a" style="left:1149.8px;top:446.36px;font-size:11.2px;line-height:11.2px;color:#bdbec1;letter-spacing:0.080px;-webkit-text-stroke:0.22px currentColor;">Unassigned</div>
<svg style="left:1294.9px;top:447.6px" width="7" height="7" viewBox="0 0 7 7"><circle cx="3.5" cy="3.5" r="3.5" fill="#f5a01e"/></svg>
<div class="a" style="left:1308.0px;top:446.36px;font-size:11.2px;line-height:11.2px;color:#bdbec1;-webkit-text-stroke:0.22px currentColor;">Medium</div>
<svg style="left:1375.8px;top:447.6px" width="7" height="7" viewBox="0 0 7 7"><circle cx="3.5" cy="3.5" r="3.5" fill="#5ac3f2"/></svg>
<div class="a" style="left:1389px;top:446.36px;width:9.5px;overflow:hidden;font-size:11.2px;line-height:11.2px;color:#bdbec1;-webkit-text-stroke:0.22px currentColor;">New</div>
<svg style="left:1416.5px;top:444.4px" width="4" height="13" viewBox="0 0 4 13"><circle cx="2" cy="1.7" r="1.1" fill="#aeafb2"/><circle cx="2" cy="6.4" r="1.1" fill="#aeafb2"/><circle cx="2" cy="11.1" r="1.1" fill="#aeafb2"/></svg>
<div class="a" style="left:121.0px;top:487.0px;width:14.8px;height:14.2px;border:2px solid #96979a;border-radius:2.5px"></div>
<div class="a" style="left:148.5px;top:481.42px;font-size:11.2px;line-height:11.2px;color:#d6d7da;letter-spacing:0.104px;-webkit-text-stroke:0.22px currentColor;">Unusual volume of network activity detected on</div>
<div class="a" style="left:148.5px;top:496.72px;font-size:11.2px;line-height:11.2px;color:#d6d7da;letter-spacing:0.120px;-webkit-text-stroke:0.22px currentColor;">52.216.133.181</div>
<div class="a" style="left:519.4px;top:484.3px;width:65.6px;height:19.7px;background:#0b2620;border-radius:2px"></div>
<svg style="left:526.7px;top:488.6px" width="11" height="11" viewBox="0 0 11 11"><circle cx="5.5" cy="5.5" r="3.6" fill="none" stroke="#3ccf9c" stroke-width="1.5"/><path d="M5.5 0.2 L5.5 2.4 M5.5 8.6 L5.5 10.8 M0.2 5.5 L2.4 5.5 M8.6 5.5 L10.8 5.5" stroke="#3ccf9c" stroke-width="1.5"/></svg>
<div class="a" style="left:545.6px;top:490.82px;font-size:8.6px;line-height:8.6px;color:#3ccf9c;font-family:'Liberation Mono',monospace;letter-spacing:-0.283px;">FINDING</div>
<svg style="left:633.5px;top:489.0px" width="11" height="11" viewBox="0 0 11 11"><rect x="0.8" y="0.8" width="9.4" height="6.6" rx="1.4" fill="none" stroke="#a7a9ad" stroke-width="1.5"/><path d="M3.2 9.6 L7.8 9.6" stroke="#a7a9ad" stroke-width="1.9"/><path d="M5.5 7.4 L5.5 8.8" stroke="#a7a9ad" stroke-width="1.4"/></svg>
<div class="a" style="left:652.0px;top:489.72px;font-size:11.2px;line-height:11.2px;color:#bdbec1;letter-spacing:0.120px;-webkit-text-stroke:0.22px currentColor;">52.216.133.181</div>
<div class="a" style="left:752.1px;top:487.0px;width:22.0px;height:14.3px;background:#f7d148;border-radius:2px"></div>
<div class="a" style="left:752.1px;top:489.16px;width:22px;text-align:center;font-size:9.5px;line-height:9.5px;color:#4a1006;-webkit-text-stroke:0.22px currentColor;">35</div>
<div class="a" style="left:858.5px;top:489.72px;font-size:11.2px;line-height:11.2px;color:#bdbec1;-webkit-text-stroke:0.22px currentColor;">5</div>
<div class="a" style="left:907.4px;top:489.89px;font-size:11px;line-height:11px;color:#bdbec1;letter-spacing:0.045px;-webkit-text-stroke:0.22px currentColor;">Today, 9:35 AM</div>
<div class="a" style="left:1007.5px;top:489.72px;font-size:11.2px;line-height:11.2px;color:#bdbec1;letter-spacing:0.294px;-webkit-text-stroke:0.22px currentColor;">Undetermined</div>
<div class="a" style="left:1149.8px;top:489.72px;font-size:11.2px;line-height:11.2px;color:#bdbec1;letter-spacing:0.080px;-webkit-text-stroke:0.22px currentColor;">Unassigned</div>
<svg style="left:1294.9px;top:491.0px" width="7" height="7" viewBox="0 0 7 7"><circle cx="3.5" cy="3.5" r="3.5" fill="#f7d148"/></svg>
<div class="a" style="left:1308.0px;top:489.72px;font-size:11.2px;line-height:11.2px;color:#bdbec1;-webkit-text-stroke:0.22px currentColor;">Low</div>
<svg style="left:1375.8px;top:491.0px" width="7" height="7" viewBox="0 0 7 7"><circle cx="3.5" cy="3.5" r="3.5" fill="#5ac3f2"/></svg>
<div class="a" style="left:1389px;top:489.72px;width:9.5px;overflow:hidden;font-size:11.2px;line-height:11.2px;color:#bdbec1;-webkit-text-stroke:0.22px currentColor;">New</div>
<svg style="left:1416.5px;top:487.8px" width="4" height="13" viewBox="0 0 4 13"><circle cx="2" cy="1.7" r="1.1" fill="#aeafb2"/><circle cx="2" cy="6.4" r="1.1" fill="#aeafb2"/><circle cx="2" cy="11.1" r="1.1" fill="#aeafb2"/></svg>
<div class="a" style="left:121.0px;top:530.4px;width:14.8px;height:14.2px;border:2px solid #96979a;border-radius:2.5px"></div>
<div class="a" style="left:148.5px;top:524.78px;font-size:11.2px;line-height:11.2px;color:#d6d7da;letter-spacing:0.104px;-webkit-text-stroke:0.22px currentColor;">Unusual volume of network activity detected on</div>
<div class="a" style="left:148.5px;top:540.08px;font-size:11.2px;line-height:11.2px;color:#d6d7da;letter-spacing:0.120px;-webkit-text-stroke:0.22px currentColor;">52.218.196.122</div>
<div class="a" style="left:519.4px;top:527.7px;width:65.6px;height:19.7px;background:#0b2620;border-radius:2px"></div>
<svg style="left:526.7px;top:532.0px" width="11" height="11" viewBox="0 0 11 11"><circle cx="5.5" cy="5.5" r="3.6" fill="none" stroke="#3ccf9c" stroke-width="1.5"/><path d="M5.5 0.2 L5.5 2.4 M5.5 8.6 L5.5 10.8 M0.2 5.5 L2.4 5.5 M8.6 5.5 L10.8 5.5" stroke="#3ccf9c" stroke-width="1.5"/></svg>
<div class="a" style="left:545.6px;top:534.18px;font-size:8.6px;line-height:8.6px;color:#3ccf9c;font-family:'Liberation Mono',monospace;letter-spacing:-0.283px;">FINDING</div>
<svg style="left:633.5px;top:532.4px" width="11" height="11" viewBox="0 0 11 11"><rect x="0.8" y="0.8" width="9.4" height="6.6" rx="1.4" fill="none" stroke="#a7a9ad" stroke-width="1.5"/><path d="M3.2 9.6 L7.8 9.6" stroke="#a7a9ad" stroke-width="1.9"/><path d="M5.5 7.4 L5.5 8.8" stroke="#a7a9ad" stroke-width="1.4"/></svg>
<div class="a" style="left:652.0px;top:533.08px;font-size:11.2px;line-height:11.2px;color:#bdbec1;letter-spacing:0.120px;-webkit-text-stroke:0.22px currentColor;">52.218.196.122</div>
<div class="a" style="left:752.1px;top:530.4px;width:22.0px;height:14.3px;background:#f7d148;border-radius:2px"></div>
<div class="a" style="left:752.1px;top:532.52px;width:22px;text-align:center;font-size:9.5px;line-height:9.5px;color:#4a1006;-webkit-text-stroke:0.22px currentColor;">20</div>
<div class="a" style="left:858.5px;top:533.08px;font-size:11.2px;line-height:11.2px;color:#bdbec1;-webkit-text-stroke:0.22px currentColor;">4</div>
<div class="a" style="left:907.4px;top:533.25px;font-size:11px;line-height:11px;color:#bdbec1;letter-spacing:0.045px;-webkit-text-stroke:0.22px currentColor;">Today, 9:27 AM</div>
<div class="a" style="left:1007.5px;top:533.08px;font-size:11.2px;line-height:11.2px;color:#bdbec1;letter-spacing:0.294px;-webkit-text-stroke:0.22px currentColor;">Undetermined</div>
<div class="a" style="left:1149.8px;top:533.08px;font-size:11.2px;line-height:11.2px;color:#bdbec1;letter-spacing:0.080px;-webkit-text-stroke:0.22px currentColor;">Unassigned</div>
<svg style="left:1294.9px;top:534.4px" width="7" height="7" viewBox="0 0 7 7"><circle cx="3.5" cy="3.5" r="3.5" fill="#f7d148"/></svg>
<div class="a" style="left:1308.0px;top:533.08px;font-size:11.2px;line-height:11.2px;color:#bdbec1;-webkit-text-stroke:0.22px currentColor;">Low</div>
<svg style="left:1375.8px;top:534.4px" width="7" height="7" viewBox="0 0 7 7"><circle cx="3.5" cy="3.5" r="3.5" fill="#5ac3f2"/></svg>
<div class="a" style="left:1389px;top:533.08px;width:9.5px;overflow:hidden;font-size:11.2px;line-height:11.2px;color:#bdbec1;-webkit-text-stroke:0.22px currentColor;">New</div>
<svg style="left:1416.5px;top:531.2px" width="4" height="13" viewBox="0 0 4 13"><circle cx="2" cy="1.7" r="1.1" fill="#aeafb2"/><circle cx="2" cy="6.4" r="1.1" fill="#aeafb2"/><circle cx="2" cy="11.1" r="1.1" fill="#aeafb2"/></svg>
<svg style="left:97.8px;top:574.4px" width="9" height="13" viewBox="0 0 9 13"><path d="M1 0.8 L7 6.5 L1 12.2" fill="none" stroke="#a0a2a6" stroke-width="1.5"/></svg>
<div class="a" style="left:121.0px;top:573.7px;width:14.8px;height:14.2px;border:2px solid #96979a;border-radius:2.5px"></div>
<div class="a" style="left:148.5px;top:568.14px;font-size:11.2px;line-height:11.2px;color:#d6d7da;letter-spacing:0.100px;-webkit-text-stroke:0.22px currentColor;">Multiple findings from the same entity</div>
<div class="a" style="left:148.5px;top:583.44px;font-size:11.2px;line-height:11.2px;color:#d6d7da;letter-spacing:0.111px;-webkit-text-stroke:0.22px currentColor;">[mickey.perre@splunktshirtcompany.com]</div>
<div class="a" style="left:519.4px;top:571.0px;width:94.8px;height:19.7px;background:#391a72;border-radius:2px"></div>
<svg style="left:526.7px;top:574.6px" width="12" height="12" viewBox="0 0 12 12"><path d="M4.2 2.8 L4.2 1.2 L7.8 1.2 L7.8 2.8" fill="none" stroke="#b08cee" stroke-width="1.3"/><rect x="1" y="2.9" width="10" height="8.1" rx="1.2" fill="none" stroke="#b08cee" stroke-width="1.4"/><path d="M1 6.6 L11 6.6" stroke="#b08cee" stroke-width="1.2"/><path d="M3.6 5.9 L3.6 7.6 M8.4 5.9 L8.4 7.6" stroke="#b08cee" stroke-width="1.4"/></svg>
<div class="a" style="left:545.8px;top:577.54px;font-size:8.6px;line-height:8.6px;color:#b08cee;font-family:'Liberation Mono',monospace;letter-spacing:-0.354px;">INVESTIGATION</div>
<svg style="left:634px;top:576.2px" width="10" height="10" viewBox="0 0 10 10"><circle cx="5" cy="2.8" r="2.1" fill="none" stroke="#a7a9ad" stroke-width="1.3"/><path d="M1 9.1 C1 6.9 2.6 6.2 5 6.2 C7.4 6.2 9 6.9 9 9.1 Z" fill="none" stroke="#a7a9ad" stroke-width="1.3" stroke-linejoin="round"/></svg>
<div class="a" style="left:652.0px;top:568.04px;font-size:11.2px;line-height:11.2px;color:#bdbec1;letter-spacing:0.123px;-webkit-text-stroke:0.22px currentColor;">mickey.perre@s</div>
<div class="a" style="left:652.0px;top:583.44px;font-size:11.2px;line-height:11.2px;color:#bdbec1;letter-spacing:0.096px;-webkit-text-stroke:0.22px currentColor;">plunktshirtco...</div>
<div class="a" style="left:752.1px;top:573.7px;width:28.0px;height:14.3px;background:#f2453f;border-radius:2px"></div>
<div class="a" style="left:752.1px;top:575.88px;width:28px;text-align:center;font-size:9.5px;line-height:9.5px;color:#4a1006;-webkit-text-stroke:0.22px currentColor;">120</div>
<div class="a" style="left:809.3px;top:576.44px;font-size:11.2px;line-height:11.2px;color:#bdbec1;-webkit-text-stroke:0.22px currentColor;">6</div>
<div class="a" style="left:858.5px;top:576.44px;font-size:11.2px;line-height:11.2px;color:#bdbec1;-webkit-text-stroke:0.22px currentColor;">25</div>
<div class="a" style="left:907.4px;top:576.61px;font-size:11px;line-height:11px;color:#bdbec1;letter-spacing:0.045px;-webkit-text-stroke:0.22px currentColor;">Today, 9:27 AM</div>
<div class="a" style="left:1007.5px;top:576.44px;font-size:11.2px;line-height:11.2px;color:#bdbec1;letter-spacing:0.294px;-webkit-text-stroke:0.22px currentColor;">Undetermined</div>
<div class="a" style="left:1149.8px;top:576.44px;font-size:11.2px;line-height:11.2px;color:#bdbec1;letter-spacing:0.080px;-webkit-text-stroke:0.22px currentColor;">Unassigned</div>
<svg style="left:1294.9px;top:577.7px" width="7" height="7" viewBox="0 0 7 7"><circle cx="3.5" cy="3.5" r="3.5" fill="#f2453f"/></svg>
<div class="a" style="left:1308.0px;top:576.44px;font-size:11.2px;line-height:11.2px;color:#bdbec1;-webkit-text-stroke:0.22px currentColor;">High</div>
<svg style="left:1375.8px;top:577.7px" width="7" height="7" viewBox="0 0 7 7"><circle cx="3.5" cy="3.5" r="3.5" fill="#5ac3f2"/></svg>
<div class="a" style="left:1389px;top:576.44px;width:9.5px;overflow:hidden;font-size:11.2px;line-height:11.2px;color:#bdbec1;-webkit-text-stroke:0.22px currentColor;">New</div>
<svg style="left:1416.5px;top:574.5px" width="4" height="13" viewBox="0 0 4 13"><circle cx="2" cy="1.7" r="1.1" fill="#aeafb2"/><circle cx="2" cy="6.4" r="1.1" fill="#aeafb2"/><circle cx="2" cy="11.1" r="1.1" fill="#aeafb2"/></svg>
<svg style="left:97.8px;top:617.8px" width="9" height="13" viewBox="0 0 9 13"><path d="M1 0.8 L7 6.5 L1 12.2" fill="none" stroke="#a0a2a6" stroke-width="1.5"/></svg>
<div class="a" style="left:121.0px;top:617.1px;width:14.8px;height:14.2px;border:2px solid #96979a;border-radius:2.5px"></div>
<div class="a" style="left:148.5px;top:611.50px;font-size:11.2px;line-height:11.2px;color:#d6d7da;letter-spacing:0.100px;-webkit-text-stroke:0.22px currentColor;">Multiple findings from the same entity</div>
<div class="a" style="left:148.5px;top:626.80px;font-size:11.2px;line-height:11.2px;color:#d6d7da;letter-spacing:0.111px;-webkit-text-stroke:0.22px currentColor;">[hayley.jensen@splunktshirtcompany.com]</div>
<div class="a" style="left:519.4px;top:614.4px;width:94.8px;height:19.7px;background:#391a72;border-radius:2px"></div>
<svg style="left:526.7px;top:618.0px" width="12" height="12" viewBox="0 0 12 12"><path d="M4.2 2.8 L4.2 1.2 L7.8 1.2 L7.8 2.8" fill="none" stroke="#b08cee" stroke-width="1.3"/><rect x="1" y="2.9" width="10" height="8.1" rx="1.2" fill="none" stroke="#b08cee" stroke-width="1.4"/><path d="M1 6.6 L11 6.6" stroke="#b08cee" stroke-width="1.2"/><path d="M3.6 5.9 L3.6 7.6 M8.4 5.9 L8.4 7.6" stroke="#b08cee" stroke-width="1.4"/></svg>
<div class="a" style="left:545.8px;top:620.90px;font-size:8.6px;line-height:8.6px;color:#b08cee;font-family:'Liberation Mono',monospace;letter-spacing:-0.354px;">INVESTIGATION</div>
<svg style="left:634px;top:619.6px" width="10" height="10" viewBox="0 0 10 10"><circle cx="5" cy="2.8" r="2.1" fill="none" stroke="#a7a9ad" stroke-width="1.3"/><path d="M1 9.1 C1 6.9 2.6 6.2 5 6.2 C7.4 6.2 9 6.9 9 9.1 Z" fill="none" stroke="#a7a9ad" stroke-width="1.3" stroke-linejoin="round"/></svg>
<div class="a" style="left:652.0px;top:611.40px;font-size:11.2px;line-height:11.2px;color:#bdbec1;letter-spacing:0.121px;-webkit-text-stroke:0.22px currentColor;">hayley.jensen@s</div>
<div class="a" style="left:652.0px;top:626.80px;font-size:11.2px;line-height:11.2px;color:#bdbec1;letter-spacing:0.096px;-webkit-text-stroke:0.22px currentColor;">plunktshirtco...</div>
<div class="a" style="left:752.1px;top:617.1px;width:28.0px;height:14.3px;background:#f2453f;border-radius:2px"></div>
<div class="a" style="left:752.1px;top:619.24px;width:28px;text-align:center;font-size:9.5px;line-height:9.5px;color:#4a1006;-webkit-text-stroke:0.22px currentColor;">150</div>
<div class="a" style="left:809.3px;top:619.80px;font-size:11.2px;line-height:11.2px;color:#bdbec1;-webkit-text-stroke:0.22px currentColor;">5</div>
<div class="a" style="left:858.5px;top:619.80px;font-size:11.2px;line-height:11.2px;color:#bdbec1;-webkit-text-stroke:0.22px currentColor;">16</div>
<div class="a" style="left:907.4px;top:619.97px;font-size:11px;line-height:11px;color:#bdbec1;letter-spacing:0.045px;-webkit-text-stroke:0.22px currentColor;">Today, 9:23 AM</div>
<div class="a" style="left:1007.5px;top:619.80px;font-size:11.2px;line-height:11.2px;color:#bdbec1;letter-spacing:0.294px;-webkit-text-stroke:0.22px currentColor;">Undetermined</div>
<div class="a" style="left:1149.8px;top:619.80px;font-size:11.2px;line-height:11.2px;color:#bdbec1;letter-spacing:0.080px;-webkit-text-stroke:0.22px currentColor;">Unassigned</div>
<svg style="left:1294.9px;top:621.1px" width="7" height="7" viewBox="0 0 7 7"><circle cx="3.5" cy="3.5" r="3.5" fill="#f2453f"/></svg>
<div class="a" style="left:1308.0px;top:619.80px;font-size:11.2px;line-height:11.2px;color:#bdbec1;-webkit-text-stroke:0.22px currentColor;">High</div>
<svg style="left:1375.8px;top:621.1px" width="7" height="7" viewBox="0 0 7 7"><circle cx="3.5" cy="3.5" r="3.5" fill="#5ac3f2"/></svg>
<div class="a" style="left:1389px;top:619.80px;width:9.5px;overflow:hidden;font-size:11.2px;line-height:11.2px;color:#bdbec1;-webkit-text-stroke:0.22px currentColor;">New</div>
<svg style="left:1416.5px;top:617.9px" width="4" height="13" viewBox="0 0 4 13"><circle cx="2" cy="1.7" r="1.1" fill="#aeafb2"/><circle cx="2" cy="6.4" r="1.1" fill="#aeafb2"/><circle cx="2" cy="11.1" r="1.1" fill="#aeafb2"/></svg>
<div class="a" style="left:121.0px;top:660.4px;width:14.8px;height:14.2px;border:2px solid #96979a;border-radius:2.5px"></div>
<div class="a" style="left:148.5px;top:663.16px;font-size:11.2px;line-height:11.2px;color:#d6d7da;letter-spacing:0.102px;-webkit-text-stroke:0.22px currentColor;">Excessive failed logins</div>
<div class="a" style="left:519.4px;top:657.7px;width:65.6px;height:19.7px;background:#0b2620;border-radius:2px"></div>
<svg style="left:526.7px;top:662.0px" width="11" height="11" viewBox="0 0 11 11"><circle cx="5.5" cy="5.5" r="3.6" fill="none" stroke="#3ccf9c" stroke-width="1.5"/><path d="M5.5 0.2 L5.5 2.4 M5.5 8.6 L5.5 10.8 M0.2 5.5 L2.4 5.5 M8.6 5.5 L10.8 5.5" stroke="#3ccf9c" stroke-width="1.5"/></svg>
<div class="a" style="left:545.6px;top:664.26px;font-size:8.6px;line-height:8.6px;color:#3ccf9c;font-family:'Liberation Mono',monospace;letter-spacing:-0.283px;">FINDING</div>
<svg style="left:633.5px;top:662.4px" width="11" height="11" viewBox="0 0 11 11"><rect x="0.8" y="0.8" width="9.4" height="6.6" rx="1.4" fill="none" stroke="#a7a9ad" stroke-width="1.5"/><path d="M3.2 9.6 L7.8 9.6" stroke="#a7a9ad" stroke-width="1.9"/><path d="M5.5 7.4 L5.5 8.8" stroke="#a7a9ad" stroke-width="1.4"/></svg>
<div class="a" style="left:652.0px;top:663.16px;font-size:11.2px;line-height:11.2px;color:#bdbec1;letter-spacing:0.134px;-webkit-text-stroke:0.22px currentColor;">macbook-46743</div>
<div class="a" style="left:752.1px;top:660.4px;width:22.0px;height:14.3px;background:#f5a01e;border-radius:2px"></div>
<div class="a" style="left:752.1px;top:662.60px;width:22px;text-align:center;font-size:9.5px;line-height:9.5px;color:#4a1006;-webkit-text-stroke:0.22px currentColor;">50</div>
<div class="a" style="left:858.5px;top:663.16px;font-size:11.2px;line-height:11.2px;color:#bdbec1;-webkit-text-stroke:0.22px currentColor;">2</div>
<div class="a" style="left:907.4px;top:663.33px;font-size:11px;line-height:11px;color:#bdbec1;letter-spacing:0.045px;-webkit-text-stroke:0.22px currentColor;">Today, 9:23 AM</div>
<div class="a" style="left:1007.5px;top:663.16px;font-size:11.2px;line-height:11.2px;color:#bdbec1;letter-spacing:0.294px;-webkit-text-stroke:0.22px currentColor;">Undetermined</div>
<div class="a" style="left:1149.8px;top:663.16px;font-size:11.2px;line-height:11.2px;color:#bdbec1;letter-spacing:0.080px;-webkit-text-stroke:0.22px currentColor;">Unassigned</div>
<svg style="left:1294.9px;top:664.4px" width="7" height="7" viewBox="0 0 7 7"><circle cx="3.5" cy="3.5" r="3.5" fill="#f7d148"/></svg>
<div class="a" style="left:1308.0px;top:663.16px;font-size:11.2px;line-height:11.2px;color:#bdbec1;-webkit-text-stroke:0.22px currentColor;">Low</div>
<svg style="left:1375.8px;top:664.4px" width="7" height="7" viewBox="0 0 7 7"><circle cx="3.5" cy="3.5" r="3.5" fill="#5ac3f2"/></svg>
<div class="a" style="left:1389px;top:663.16px;width:9.5px;overflow:hidden;font-size:11.2px;line-height:11.2px;color:#bdbec1;-webkit-text-stroke:0.22px currentColor;">New</div>
<svg style="left:1416.5px;top:661.2px" width="4" height="13" viewBox="0 0 4 13"><circle cx="2" cy="1.7" r="1.1" fill="#aeafb2"/><circle cx="2" cy="6.4" r="1.1" fill="#aeafb2"/><circle cx="2" cy="11.1" r="1.1" fill="#aeafb2"/></svg>
<div class="a" style="left:121.0px;top:703.8px;width:14.8px;height:14.2px;border:2px solid #96979a;border-radius:2.5px"></div>
<div class="a" style="left:148.5px;top:698.22px;font-size:11.2px;line-height:11.2px;color:#d6d7da;letter-spacing:0.099px;-webkit-text-stroke:0.22px currentColor;">24 hour risk threshold exceed for entity</div>
<div class="a" style="left:148.5px;top:713.52px;font-size:11.2px;line-height:11.2px;color:#d6d7da;letter-spacing:0.123px;-webkit-text-stroke:0.22px currentColor;">[macbook-44591]</div>
<div class="a" style="left:519.4px;top:701.1px;width:65.6px;height:19.7px;background:#0b2620;border-radius:2px"></div>
<svg style="left:526.7px;top:705.4px" width="11" height="11" viewBox="0 0 11 11"><circle cx="5.5" cy="5.5" r="3.6" fill="none" stroke="#3ccf9c" stroke-width="1.5"/><path d="M5.5 0.2 L5.5 2.4 M5.5 8.6 L5.5 10.8 M0.2 5.5 L2.4 5.5 M8.6 5.5 L10.8 5.5" stroke="#3ccf9c" stroke-width="1.5"/></svg>
<div class="a" style="left:545.6px;top:707.62px;font-size:8.6px;line-height:8.6px;color:#3ccf9c;font-family:'Liberation Mono',monospace;letter-spacing:-0.283px;">FINDING</div>
<svg style="left:633.5px;top:705.8px" width="11" height="11" viewBox="0 0 11 11"><rect x="0.8" y="0.8" width="9.4" height="6.6" rx="1.4" fill="none" stroke="#a7a9ad" stroke-width="1.5"/><path d="M3.2 9.6 L7.8 9.6" stroke="#a7a9ad" stroke-width="1.9"/><path d="M5.5 7.4 L5.5 8.8" stroke="#a7a9ad" stroke-width="1.4"/></svg>
<div class="a" style="left:652.0px;top:706.52px;font-size:11.2px;line-height:11.2px;color:#bdbec1;letter-spacing:0.134px;-webkit-text-stroke:0.22px currentColor;">macbook-44591</div>
<div class="a" style="left:752.1px;top:703.8px;width:22.0px;height:14.3px;background:#f2453f;border-radius:2px"></div>
<div class="a" style="left:752.1px;top:705.96px;width:22px;text-align:center;font-size:9.5px;line-height:9.5px;color:#4a1006;-webkit-text-stroke:0.22px currentColor;">90</div>
<div class="a" style="left:858.5px;top:706.52px;font-size:11.2px;line-height:11.2px;color:#bdbec1;-webkit-text-stroke:0.22px currentColor;">3</div>
<div class="a" style="left:907.4px;top:706.69px;font-size:11px;line-height:11px;color:#bdbec1;letter-spacing:0.045px;-webkit-text-stroke:0.22px currentColor;">Today, 9:19 AM</div>
<div class="a" style="left:1007.5px;top:706.52px;font-size:11.2px;line-height:11.2px;color:#bdbec1;letter-spacing:0.294px;-webkit-text-stroke:0.22px currentColor;">Undetermined</div>
<div class="a" style="left:1149.8px;top:706.52px;font-size:11.2px;line-height:11.2px;color:#bdbec1;letter-spacing:0.080px;-webkit-text-stroke:0.22px currentColor;">Unassigned</div>
<svg style="left:1294.9px;top:707.8px" width="7" height="7" viewBox="0 0 7 7"><circle cx="3.5" cy="3.5" r="3.5" fill="#f5a01e"/></svg>
<div class="a" style="left:1308.0px;top:706.52px;font-size:11.2px;line-height:11.2px;color:#bdbec1;-webkit-text-stroke:0.22px currentColor;">Medium</div>
<svg style="left:1375.8px;top:707.8px" width="7" height="7" viewBox="0 0 7 7"><circle cx="3.5" cy="3.5" r="3.5" fill="#5ac3f2"/></svg>
<div class="a" style="left:1389px;top:706.52px;width:9.5px;overflow:hidden;font-size:11.2px;line-height:11.2px;color:#bdbec1;-webkit-text-stroke:0.22px currentColor;">New</div>
<svg style="left:1416.5px;top:704.6px" width="4" height="13" viewBox="0 0 4 13"><circle cx="2" cy="1.7" r="1.1" fill="#aeafb2"/><circle cx="2" cy="6.4" r="1.1" fill="#aeafb2"/><circle cx="2" cy="11.1" r="1.1" fill="#aeafb2"/></svg>
<div class="a" style="left:121.0px;top:747.2px;width:14.8px;height:14.2px;border:2px solid #96979a;border-radius:2.5px"></div>
<div class="a" style="left:148.5px;top:741.58px;font-size:11.2px;line-height:11.2px;color:#d6d7da;letter-spacing:0.104px;-webkit-text-stroke:0.22px currentColor;">Unusual volume of network activity detected on</div>
<div class="a" style="left:148.5px;top:756.88px;font-size:11.2px;line-height:11.2px;color:#d6d7da;letter-spacing:0.119px;-webkit-text-stroke:0.22px currentColor;">34.215.24.225</div>
<div class="a" style="left:519.4px;top:744.5px;width:65.6px;height:19.7px;background:#0b2620;border-radius:2px"></div>
<svg style="left:526.7px;top:748.8px" width="11" height="11" viewBox="0 0 11 11"><circle cx="5.5" cy="5.5" r="3.6" fill="none" stroke="#3ccf9c" stroke-width="1.5"/><path d="M5.5 0.2 L5.5 2.4 M5.5 8.6 L5.5 10.8 M0.2 5.5 L2.4 5.5 M8.6 5.5 L10.8 5.5" stroke="#3ccf9c" stroke-width="1.5"/></svg>
<div class="a" style="left:545.6px;top:750.98px;font-size:8.6px;line-height:8.6px;color:#3ccf9c;font-family:'Liberation Mono',monospace;letter-spacing:-0.283px;">FINDING</div>
<svg style="left:633.5px;top:749.2px" width="11" height="11" viewBox="0 0 11 11"><rect x="0.8" y="0.8" width="9.4" height="6.6" rx="1.4" fill="none" stroke="#a7a9ad" stroke-width="1.5"/><path d="M3.2 9.6 L7.8 9.6" stroke="#a7a9ad" stroke-width="1.9"/><path d="M5.5 7.4 L5.5 8.8" stroke="#a7a9ad" stroke-width="1.4"/></svg>
<div class="a" style="left:652.0px;top:749.88px;font-size:11.2px;line-height:11.2px;color:#bdbec1;letter-spacing:0.119px;-webkit-text-stroke:0.22px currentColor;">34.215.24.225</div>
<div class="a" style="left:752.1px;top:747.2px;width:22.0px;height:14.3px;background:#f5a01e;border-radius:2px"></div>
<div class="a" style="left:752.1px;top:749.32px;width:22px;text-align:center;font-size:9.5px;line-height:9.5px;color:#4a1006;-webkit-text-stroke:0.22px currentColor;">55</div>
<div class="a" style="left:858.5px;top:749.88px;font-size:11.2px;line-height:11.2px;color:#bdbec1;-webkit-text-stroke:0.22px currentColor;">3</div>
<div class="a" style="left:907.4px;top:750.05px;font-size:11px;line-height:11px;color:#bdbec1;letter-spacing:0.045px;-webkit-text-stroke:0.22px currentColor;">Today, 9:19 AM</div>
<div class="a" style="left:1007.5px;top:749.88px;font-size:11.2px;line-height:11.2px;color:#bdbec1;letter-spacing:0.294px;-webkit-text-stroke:0.22px currentColor;">Undetermined</div>
<div class="a" style="left:1149.8px;top:749.88px;font-size:11.2px;line-height:11.2px;color:#bdbec1;letter-spacing:0.080px;-webkit-text-stroke:0.22px currentColor;">Unassigned</div>
<svg style="left:1294.9px;top:751.2px" width="7" height="7" viewBox="0 0 7 7"><circle cx="3.5" cy="3.5" r="3.5" fill="#f5a01e"/></svg>
<div class="a" style="left:1308.0px;top:749.88px;font-size:11.2px;line-height:11.2px;color:#bdbec1;-webkit-text-stroke:0.22px currentColor;">Medium</div>
<svg style="left:1375.8px;top:751.2px" width="7" height="7" viewBox="0 0 7 7"><circle cx="3.5" cy="3.5" r="3.5" fill="#5ac3f2"/></svg>
<div class="a" style="left:1389px;top:749.88px;width:9.5px;overflow:hidden;font-size:11.2px;line-height:11.2px;color:#bdbec1;-webkit-text-stroke:0.22px currentColor;">New</div>
<svg style="left:1416.5px;top:748.0px" width="4" height="13" viewBox="0 0 4 13"><circle cx="2" cy="1.7" r="1.1" fill="#aeafb2"/><circle cx="2" cy="6.4" r="1.1" fill="#aeafb2"/><circle cx="2" cy="11.1" r="1.1" fill="#aeafb2"/></svg>
<div class="a" style="left:121.0px;top:790.5px;width:14.8px;height:14.2px;border:2px solid #96979a;border-radius:2.5px"></div>
<div class="a" style="left:148.5px;top:784.94px;font-size:11.2px;line-height:11.2px;color:#d6d7da;letter-spacing:0.098px;-webkit-text-stroke:0.22px currentColor;">24 hour risk threshold exceed for entity [win-</div>
<div class="a" style="left:148.5px;top:800.24px;font-size:11.2px;line-height:11.2px;color:#d6d7da;letter-spacing:0.126px;-webkit-text-stroke:0.22px currentColor;">hp-85570]</div>
<div class="a" style="left:519.4px;top:787.8px;width:65.6px;height:19.7px;background:#0b2620;border-radius:2px"></div>
<svg style="left:526.7px;top:792.1px" width="11" height="11" viewBox="0 0 11 11"><circle cx="5.5" cy="5.5" r="3.6" fill="none" stroke="#3ccf9c" stroke-width="1.5"/><path d="M5.5 0.2 L5.5 2.4 M5.5 8.6 L5.5 10.8 M0.2 5.5 L2.4 5.5 M8.6 5.5 L10.8 5.5" stroke="#3ccf9c" stroke-width="1.5"/></svg>
<div class="a" style="left:545.6px;top:794.34px;font-size:8.6px;line-height:8.6px;color:#3ccf9c;font-family:'Liberation Mono',monospace;letter-spacing:-0.283px;">FINDING</div>
<svg style="left:633.5px;top:792.5px" width="11" height="11" viewBox="0 0 11 11"><rect x="0.8" y="0.8" width="9.4" height="6.6" rx="1.4" fill="none" stroke="#a7a9ad" stroke-width="1.5"/><path d="M3.2 9.6 L7.8 9.6" stroke="#a7a9ad" stroke-width="1.9"/><path d="M5.5 7.4 L5.5 8.8" stroke="#a7a9ad" stroke-width="1.4"/></svg>
<div class="a" style="left:652.0px;top:793.24px;font-size:11.2px;line-height:11.2px;color:#bdbec1;letter-spacing:0.123px;-webkit-text-stroke:0.22px currentColor;">win-hp-85570</div>
<div class="a" style="left:752.1px;top:790.5px;width:22.0px;height:14.3px;background:#f5a01e;border-radius:2px"></div>
<div class="a" style="left:752.1px;top:792.68px;width:22px;text-align:center;font-size:9.5px;line-height:9.5px;color:#4a1006;-webkit-text-stroke:0.22px currentColor;">65</div>
<div class="a" style="left:858.5px;top:793.24px;font-size:11.2px;line-height:11.2px;color:#bdbec1;-webkit-text-stroke:0.22px currentColor;">5</div>
<div class="a" style="left:907.4px;top:793.41px;font-size:11px;line-height:11px;color:#bdbec1;letter-spacing:0.045px;-webkit-text-stroke:0.22px currentColor;">Today, 9:19 AM</div>
<div class="a" style="left:1007.5px;top:793.24px;font-size:11.2px;line-height:11.2px;color:#bdbec1;letter-spacing:0.294px;-webkit-text-stroke:0.22px currentColor;">Undetermined</div>
<div class="a" style="left:1149.8px;top:793.24px;font-size:11.2px;line-height:11.2px;color:#bdbec1;letter-spacing:0.080px;-webkit-text-stroke:0.22px currentColor;">Unassigned</div>
<svg style="left:1294.9px;top:794.5px" width="7" height="7" viewBox="0 0 7 7"><circle cx="3.5" cy="3.5" r="3.5" fill="#f5a01e"/></svg>
<div class="a" style="left:1308.0px;top:793.24px;font-size:11.2px;line-height:11.2px;color:#bdbec1;-webkit-text-stroke:0.22px currentColor;">Medium</div>
<svg style="left:1375.8px;top:794.5px" width="7" height="7" viewBox="0 0 7 7"><circle cx="3.5" cy="3.5" r="3.5" fill="#5ac3f2"/></svg>
<div class="a" style="left:1389px;top:793.24px;width:9.5px;overflow:hidden;font-size:11.2px;line-height:11.2px;color:#bdbec1;-webkit-text-stroke:0.22px currentColor;">New</div>
<svg style="left:1416.5px;top:791.3px" width="4" height="13" viewBox="0 0 4 13"><circle cx="2" cy="1.7" r="1.1" fill="#aeafb2"/><circle cx="2" cy="6.4" r="1.1" fill="#aeafb2"/><circle cx="2" cy="11.1" r="1.1" fill="#aeafb2"/></svg>
<div class="a" style="left:121.0px;top:833.9px;width:14.8px;height:14.2px;border:2px solid #96979a;border-radius:2.5px"></div>
<div class="a" style="left:148.5px;top:828.30px;font-size:11.2px;line-height:11.2px;color:#d6d7da;letter-spacing:0.104px;-webkit-text-stroke:0.22px currentColor;">Unusual volume of network activity detected on</div>
<div class="a" style="left:148.5px;top:843.60px;font-size:11.2px;line-height:11.2px;color:#d6d7da;letter-spacing:0.119px;-webkit-text-stroke:0.22px currentColor;">172.16.0.127</div>
<div class="a" style="left:519.4px;top:831.2px;width:65.6px;height:19.7px;background:#0b2620;border-radius:2px"></div>
<svg style="left:526.7px;top:835.5px" width="11" height="11" viewBox="0 0 11 11"><circle cx="5.5" cy="5.5" r="3.6" fill="none" stroke="#3ccf9c" stroke-width="1.5"/><path d="M5.5 0.2 L5.5 2.4 M5.5 8.6 L5.5 10.8 M0.2 5.5 L2.4 5.5 M8.6 5.5 L10.8 5.5" stroke="#3ccf9c" stroke-width="1.5"/></svg>
<div class="a" style="left:545.6px;top:837.70px;font-size:8.6px;line-height:8.6px;color:#3ccf9c;font-family:'Liberation Mono',monospace;letter-spacing:-0.283px;">FINDING</div>
<svg style="left:633.5px;top:835.9px" width="11" height="11" viewBox="0 0 11 11"><rect x="0.8" y="0.8" width="9.4" height="6.6" rx="1.4" fill="none" stroke="#a7a9ad" stroke-width="1.5"/><path d="M3.2 9.6 L7.8 9.6" stroke="#a7a9ad" stroke-width="1.9"/><path d="M5.5 7.4 L5.5 8.8" stroke="#a7a9ad" stroke-width="1.4"/></svg>
<div class="a" style="left:652.0px;top:836.60px;font-size:11.2px;line-height:11.2px;color:#bdbec1;letter-spacing:0.119px;-webkit-text-stroke:0.22px currentColor;">172.16.0.127</div>
<div class="a" style="left:752.1px;top:833.9px;width:22.0px;height:14.3px;background:#f5a01e;border-radius:2px"></div>
<div class="a" style="left:752.1px;top:836.04px;width:22px;text-align:center;font-size:9.5px;line-height:9.5px;color:#4a1006;-webkit-text-stroke:0.22px currentColor;">60</div>
<div class="a" style="left:858.5px;top:836.60px;font-size:11.2px;line-height:11.2px;color:#bdbec1;-webkit-text-stroke:0.22px currentColor;">3</div>
<div class="a" style="left:907.4px;top:836.77px;font-size:11px;line-height:11px;color:#bdbec1;letter-spacing:0.045px;-webkit-text-stroke:0.22px currentColor;">Today, 9:15 AM</div>
<div class="a" style="left:1007.5px;top:836.60px;font-size:11.2px;line-height:11.2px;color:#bdbec1;letter-spacing:0.294px;-webkit-text-stroke:0.22px currentColor;">Undetermined</div>
<div class="a" style="left:1149.8px;top:836.60px;font-size:11.2px;line-height:11.2px;color:#bdbec1;letter-spacing:0.080px;-webkit-text-stroke:0.22px currentColor;">Unassigned</div>
<svg style="left:1294.9px;top:837.9px" width="7" height="7" viewBox="0 0 7 7"><circle cx="3.5" cy="3.5" r="3.5" fill="#f5a01e"/></svg>
<div class="a" style="left:1308.0px;top:836.60px;font-size:11.2px;line-height:11.2px;color:#bdbec1;-webkit-text-stroke:0.22px currentColor;">Medium</div>
<svg style="left:1375.8px;top:837.9px" width="7" height="7" viewBox="0 0 7 7"><circle cx="3.5" cy="3.5" r="3.5" fill="#5ac3f2"/></svg>
<div class="a" style="left:1389px;top:836.60px;width:9.5px;overflow:hidden;font-size:11.2px;line-height:11.2px;color:#bdbec1;-webkit-text-stroke:0.22px currentColor;">New</div>
<svg style="left:1416.5px;top:834.7px" width="4" height="13" viewBox="0 0 4 13"><circle cx="2" cy="1.7" r="1.1" fill="#aeafb2"/><circle cx="2" cy="6.4" r="1.1" fill="#aeafb2"/><circle cx="2" cy="11.1" r="1.1" fill="#aeafb2"/></svg>
<div class="a" style="left:121.0px;top:877.2px;width:14.8px;height:14.2px;border:2px solid #96979a;border-radius:2.5px"></div>
<div class="a" style="left:148.5px;top:879.96px;font-size:11.2px;line-height:11.2px;color:#d6d7da;letter-spacing:0.102px;-webkit-text-stroke:0.22px currentColor;">Excessive failed logins</div>
<div class="a" style="left:519.4px;top:874.5px;width:65.6px;height:19.7px;background:#0b2620;border-radius:2px"></div>
<svg style="left:526.7px;top:878.8px" width="11" height="11" viewBox="0 0 11 11"><circle cx="5.5" cy="5.5" r="3.6" fill="none" stroke="#3ccf9c" stroke-width="1.5"/><path d="M5.5 0.2 L5.5 2.4 M5.5 8.6 L5.5 10.8 M0.2 5.5 L2.4 5.5 M8.6 5.5 L10.8 5.5" stroke="#3ccf9c" stroke-width="1.5"/></svg>
<div class="a" style="left:545.6px;top:881.06px;font-size:8.6px;line-height:8.6px;color:#3ccf9c;font-family:'Liberation Mono',monospace;letter-spacing:-0.283px;">FINDING</div>
<svg style="left:633.5px;top:879.2px" width="11" height="11" viewBox="0 0 11 11"><rect x="0.8" y="0.8" width="9.4" height="6.6" rx="1.4" fill="none" stroke="#a7a9ad" stroke-width="1.5"/><path d="M3.2 9.6 L7.8 9.6" stroke="#a7a9ad" stroke-width="1.9"/><path d="M5.5 7.4 L5.5 8.8" stroke="#a7a9ad" stroke-width="1.4"/></svg>
<div class="a" style="left:652.0px;top:871.56px;font-size:11.2px;line-height:11.2px;color:#bdbec1;letter-spacing:0.114px;-webkit-text-stroke:0.22px currentColor;">win-lenovo-</div>
<div class="a" style="left:652.0px;top:886.96px;font-size:11.2px;line-height:11.2px;color:#bdbec1;letter-spacing:0.156px;-webkit-text-stroke:0.22px currentColor;">15752</div>
<div class="a" style="left:752.1px;top:877.2px;width:22.0px;height:14.3px;background:#f5a01e;border-radius:2px"></div>
<div class="a" style="left:752.1px;top:879.40px;width:22px;text-align:center;font-size:9.5px;line-height:9.5px;color:#4a1006;-webkit-text-stroke:0.22px currentColor;">70</div>
<div class="a" style="left:858.5px;top:879.96px;font-size:11.2px;line-height:11.2px;color:#bdbec1;-webkit-text-stroke:0.22px currentColor;">8</div>
<div class="a" style="left:907.4px;top:880.13px;font-size:11px;line-height:11px;color:#bdbec1;letter-spacing:0.045px;-webkit-text-stroke:0.22px currentColor;">Today, 9:15 AM</div>
<div class="a" style="left:1007.5px;top:879.96px;font-size:11.2px;line-height:11.2px;color:#bdbec1;letter-spacing:0.294px;-webkit-text-stroke:0.22px currentColor;">Undetermined</div>
<div class="a" style="left:1149.8px;top:879.96px;font-size:11.2px;line-height:11.2px;color:#bdbec1;letter-spacing:0.080px;-webkit-text-stroke:0.22px currentColor;">Unassigned</div>
<svg style="left:1294.9px;top:881.2px" width="7" height="7" viewBox="0 0 7 7"><circle cx="3.5" cy="3.5" r="3.5" fill="#f7d148"/></svg>
<div class="a" style="left:1308.0px;top:879.96px;font-size:11.2px;line-height:11.2px;color:#bdbec1;-webkit-text-stroke:0.22px currentColor;">Low</div>
<svg style="left:1375.8px;top:881.2px" width="7" height="7" viewBox="0 0 7 7"><circle cx="3.5" cy="3.5" r="3.5" fill="#5ac3f2"/></svg>
<div class="a" style="left:1389px;top:879.96px;width:9.5px;overflow:hidden;font-size:11.2px;line-height:11.2px;color:#bdbec1;-webkit-text-stroke:0.22px currentColor;">New</div>
<svg style="left:1416.5px;top:878.0px" width="4" height="13" viewBox="0 0 4 13"><circle cx="2" cy="1.7" r="1.1" fill="#aeafb2"/><circle cx="2" cy="6.4" r="1.1" fill="#aeafb2"/><circle cx="2" cy="11.1" r="1.1" fill="#aeafb2"/></svg>
<div class="a" style="left:121.0px;top:920.6px;width:14.8px;height:14.2px;border:2px solid #96979a;border-radius:2.5px"></div>
<div class="a" style="left:148.5px;top:923.32px;font-size:11.2px;line-height:11.2px;color:#d6d7da;letter-spacing:0.102px;-webkit-text-stroke:0.22px currentColor;">Excessive failed logins</div>
<div class="a" style="left:519.4px;top:917.9px;width:65.6px;height:19.7px;background:#0b2620;border-radius:2px"></div>
<svg style="left:526.7px;top:922.2px" width="11" height="11" viewBox="0 0 11 11"><circle cx="5.5" cy="5.5" r="3.6" fill="none" stroke="#3ccf9c" stroke-width="1.5"/><path d="M5.5 0.2 L5.5 2.4 M5.5 8.6 L5.5 10.8 M0.2 5.5 L2.4 5.5 M8.6 5.5 L10.8 5.5" stroke="#3ccf9c" stroke-width="1.5"/></svg>
<div class="a" style="left:545.6px;top:924.42px;font-size:8.6px;line-height:8.6px;color:#3ccf9c;font-family:'Liberation Mono',monospace;letter-spacing:-0.283px;">FINDING</div>
<svg style="left:633.5px;top:922.6px" width="11" height="11" viewBox="0 0 11 11"><rect x="0.8" y="0.8" width="9.4" height="6.6" rx="1.4" fill="none" stroke="#a7a9ad" stroke-width="1.5"/><path d="M3.2 9.6 L7.8 9.6" stroke="#a7a9ad" stroke-width="1.9"/><path d="M5.5 7.4 L5.5 8.8" stroke="#a7a9ad" stroke-width="1.4"/></svg>
<div class="a" style="left:652.0px;top:914.92px;font-size:11.2px;line-height:11.2px;color:#bdbec1;letter-spacing:0.114px;-webkit-text-stroke:0.22px currentColor;">win-lenovo-</div>
<div class="a" style="left:652.0px;top:930.32px;font-size:11.2px;line-height:11.2px;color:#bdbec1;letter-spacing:0.156px;-webkit-text-stroke:0.22px currentColor;">16585</div>
<div class="a" style="left:752.1px;top:920.6px;width:22.0px;height:14.3px;background:#f5a01e;border-radius:2px"></div>
<div class="a" style="left:752.1px;top:922.76px;width:22px;text-align:center;font-size:9.5px;line-height:9.5px;color:#4a1006;-webkit-text-stroke:0.22px currentColor;">70</div>
<div class="a" style="left:858.5px;top:923.32px;font-size:11.2px;line-height:11.2px;color:#bdbec1;-webkit-text-stroke:0.22px currentColor;">7</div>
<div class="a" style="left:907.4px;top:923.49px;font-size:11px;line-height:11px;color:#bdbec1;letter-spacing:0.045px;-webkit-text-stroke:0.22px currentColor;">Today, 9:12 AM</div>
<div class="a" style="left:1007.5px;top:923.32px;font-size:11.2px;line-height:11.2px;color:#bdbec1;letter-spacing:0.294px;-webkit-text-stroke:0.22px currentColor;">Undetermined</div>
<div class="a" style="left:1149.8px;top:923.32px;font-size:11.2px;line-height:11.2px;color:#bdbec1;letter-spacing:0.080px;-webkit-text-stroke:0.22px currentColor;">Unassigned</div>
<svg style="left:1294.9px;top:924.6px" width="7" height="7" viewBox="0 0 7 7"><circle cx="3.5" cy="3.5" r="3.5" fill="#f7d148"/></svg>
<div class="a" style="left:1308.0px;top:923.32px;font-size:11.2px;line-height:11.2px;color:#bdbec1;-webkit-text-stroke:0.22px currentColor;">Low</div>
<svg style="left:1375.8px;top:924.6px" width="7" height="7" viewBox="0 0 7 7"><circle cx="3.5" cy="3.5" r="3.5" fill="#5ac3f2"/></svg>
<div class="a" style="left:1389px;top:923.32px;width:9.5px;overflow:hidden;font-size:11.2px;line-height:11.2px;color:#bdbec1;-webkit-text-stroke:0.22px currentColor;">New</div>
<svg style="left:1416.5px;top:921.4px" width="4" height="13" viewBox="0 0 4 13"><circle cx="2" cy="1.7" r="1.1" fill="#aeafb2"/><circle cx="2" cy="6.4" r="1.1" fill="#aeafb2"/><circle cx="2" cy="11.1" r="1.1" fill="#aeafb2"/></svg>
</body></html>
